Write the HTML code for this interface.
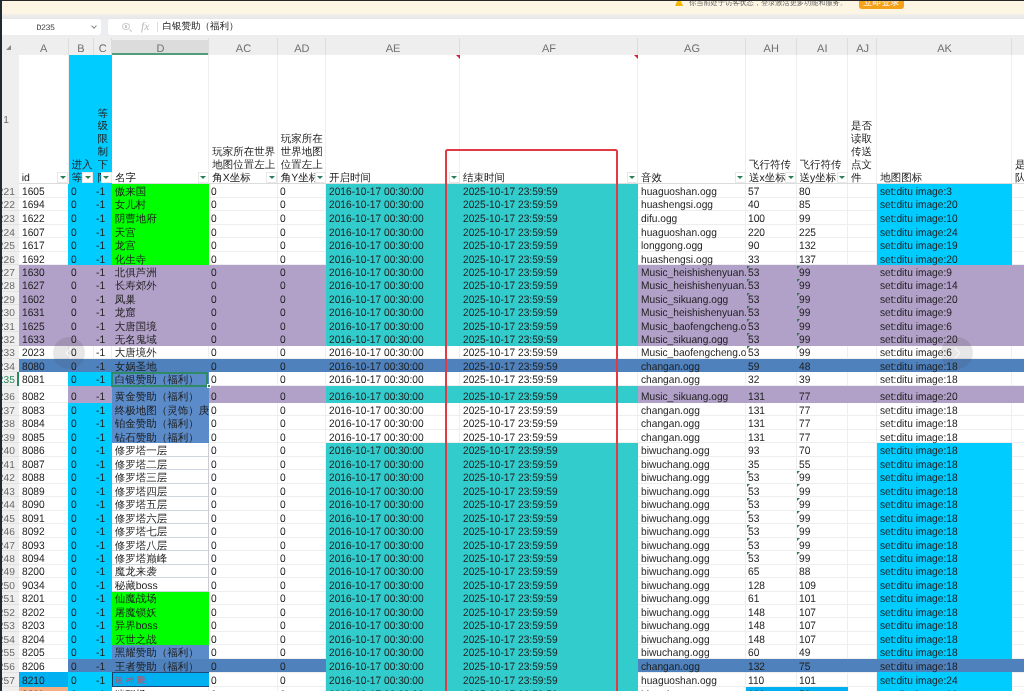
<!DOCTYPE html>
<html><head><meta charset="utf-8">
<style>
html,body{margin:0;padding:0;}
body{width:1024px;height:691px;overflow:hidden;position:relative;background:#fff;font-family:"Liberation Sans",sans-serif;text-rendering:geometricPrecision;}
div{position:absolute;box-sizing:border-box;}
.t{font-size:10.2px;color:#1e1e1e;white-space:nowrap;overflow:hidden;}
.h{font-size:10.5px;color:#222;}
.fb{width:11px;height:11px;background:#fff;border:1px solid #e8e8e8;}
.fb:after{content:"";position:absolute;left:1.5px;top:3px;border-left:3px solid transparent;border-right:3px solid transparent;border-top:3.5px solid #2a7d55;}
.tri{width:0;height:0;border-top:3.5px solid #2d7a48;border-right:3.5px solid transparent;}
.ctri{width:0;height:0;border-top:4px solid #d8203a;border-left:4px solid transparent;}
.rn{font-size:10.2px;color:#6a6a6a;white-space:nowrap;}
.cl{font-size:11px;color:#6e6e6e;text-align:center;white-space:nowrap;}
.corner{width:0;height:0;border-bottom:5px solid #8a8a8a;border-left:5px solid transparent;}
.circ{width:32px;height:32px;border-radius:50%;background:rgba(60,60,60,0.12);}
.chev{position:absolute;top:12.5px;width:7px;height:7px;border-top:1.7px solid rgba(255,255,255,0.85);border-left:1.7px solid rgba(255,255,255,0.85);}
.chev.l{left:14.25px;transform:rotate(-45deg);}
.chev.r{left:10.35px;transform:rotate(135deg);}
</style></head><body>
<div style="left:0;top:0;width:1024px;height:691px;overflow:hidden;will-change:transform">
<!-- body -->
<div style="left:67.50px;top:55.00px;width:1.00px;height:636.00px;background:#eeeeee"></div>
<div style="left:92.50px;top:55.00px;width:1.00px;height:636.00px;background:#eeeeee"></div>
<div style="left:111.00px;top:55.00px;width:1.00px;height:636.00px;background:#eeeeee"></div>
<div style="left:208.20px;top:55.00px;width:1.00px;height:636.00px;background:#eeeeee"></div>
<div style="left:276.70px;top:55.00px;width:1.00px;height:636.00px;background:#eeeeee"></div>
<div style="left:325.00px;top:55.00px;width:1.00px;height:636.00px;background:#eeeeee"></div>
<div style="left:459.00px;top:55.00px;width:1.00px;height:636.00px;background:#eeeeee"></div>
<div style="left:637.00px;top:55.00px;width:1.00px;height:636.00px;background:#eeeeee"></div>
<div style="left:745.00px;top:55.00px;width:1.00px;height:636.00px;background:#eeeeee"></div>
<div style="left:795.50px;top:55.00px;width:1.00px;height:636.00px;background:#eeeeee"></div>
<div style="left:847.00px;top:55.00px;width:1.00px;height:636.00px;background:#eeeeee"></div>
<div style="left:876.20px;top:55.00px;width:1.00px;height:636.00px;background:#eeeeee"></div>
<div style="left:1011.00px;top:55.00px;width:1.00px;height:636.00px;background:#eeeeee"></div>
<div style="left:1089.00px;top:55.00px;width:1.00px;height:636.00px;background:#eeeeee"></div>
<div style="left:18.70px;top:183.00px;width:1024.00px;height:1.00px;background:#dcdcdc"></div>
<div style="left:18.70px;top:196.56px;width:1024.00px;height:1.00px;background:#eeeeee"></div>
<div style="left:18.70px;top:210.12px;width:1024.00px;height:1.00px;background:#eeeeee"></div>
<div style="left:18.70px;top:223.68px;width:1024.00px;height:1.00px;background:#eeeeee"></div>
<div style="left:18.70px;top:237.23px;width:1024.00px;height:1.00px;background:#eeeeee"></div>
<div style="left:18.70px;top:250.79px;width:1024.00px;height:1.00px;background:#eeeeee"></div>
<div style="left:18.70px;top:264.35px;width:1024.00px;height:1.00px;background:#eeeeee"></div>
<div style="left:18.70px;top:277.73px;width:1024.00px;height:1.00px;background:#eeeeee"></div>
<div style="left:18.70px;top:291.10px;width:1024.00px;height:1.00px;background:#eeeeee"></div>
<div style="left:18.70px;top:304.48px;width:1024.00px;height:1.00px;background:#eeeeee"></div>
<div style="left:18.70px;top:317.85px;width:1024.00px;height:1.00px;background:#eeeeee"></div>
<div style="left:18.70px;top:331.23px;width:1024.00px;height:1.00px;background:#eeeeee"></div>
<div style="left:18.70px;top:344.60px;width:1024.00px;height:1.00px;background:#eeeeee"></div>
<div style="left:18.70px;top:357.70px;width:1024.00px;height:1.00px;background:#eeeeee"></div>
<div style="left:18.70px;top:371.40px;width:1024.00px;height:1.00px;background:#eeeeee"></div>
<div style="left:18.70px;top:385.10px;width:1024.00px;height:1.00px;background:#eeeeee"></div>
<div style="left:18.70px;top:401.80px;width:1024.00px;height:1.00px;background:#eeeeee"></div>
<div style="left:18.70px;top:415.30px;width:1024.00px;height:1.00px;background:#eeeeee"></div>
<div style="left:18.70px;top:428.80px;width:1024.00px;height:1.00px;background:#eeeeee"></div>
<div style="left:18.70px;top:442.30px;width:1024.00px;height:1.00px;background:#eeeeee"></div>
<div style="left:18.70px;top:455.80px;width:1024.00px;height:1.00px;background:#eeeeee"></div>
<div style="left:18.70px;top:469.30px;width:1024.00px;height:1.00px;background:#eeeeee"></div>
<div style="left:18.70px;top:482.80px;width:1024.00px;height:1.00px;background:#eeeeee"></div>
<div style="left:18.70px;top:496.30px;width:1024.00px;height:1.00px;background:#eeeeee"></div>
<div style="left:18.70px;top:509.80px;width:1024.00px;height:1.00px;background:#eeeeee"></div>
<div style="left:18.70px;top:523.30px;width:1024.00px;height:1.00px;background:#eeeeee"></div>
<div style="left:18.70px;top:536.80px;width:1024.00px;height:1.00px;background:#eeeeee"></div>
<div style="left:18.70px;top:550.30px;width:1024.00px;height:1.00px;background:#eeeeee"></div>
<div style="left:18.70px;top:563.74px;width:1024.00px;height:1.00px;background:#eeeeee"></div>
<div style="left:18.70px;top:577.17px;width:1024.00px;height:1.00px;background:#eeeeee"></div>
<div style="left:18.70px;top:590.61px;width:1024.00px;height:1.00px;background:#eeeeee"></div>
<div style="left:18.70px;top:604.05px;width:1024.00px;height:1.00px;background:#eeeeee"></div>
<div style="left:18.70px;top:617.49px;width:1024.00px;height:1.00px;background:#eeeeee"></div>
<div style="left:18.70px;top:630.92px;width:1024.00px;height:1.00px;background:#eeeeee"></div>
<div style="left:18.70px;top:644.36px;width:1024.00px;height:1.00px;background:#eeeeee"></div>
<div style="left:18.70px;top:657.80px;width:1024.00px;height:1.00px;background:#eeeeee"></div>
<div style="left:18.70px;top:671.50px;width:1024.00px;height:1.00px;background:#eeeeee"></div>
<div style="left:18.70px;top:686.00px;width:1024.00px;height:1.00px;background:#eeeeee"></div>
<div style="left:18.70px;top:699.50px;width:1024.00px;height:1.00px;background:#eeeeee"></div>
<div style="left:68.00px;top:184.00px;width:44.00px;height:14.00px;background:#00ccff"></div>
<div style="left:112.00px;top:184.00px;width:97.00px;height:14.00px;background:#00ff00"></div>
<div style="left:326.00px;top:184.00px;width:312.00px;height:14.00px;background:#33cccc"></div>
<div style="left:877.00px;top:184.00px;width:135.00px;height:14.00px;background:#00ccff"></div>
<div style="left:68.00px;top:198.00px;width:44.00px;height:13.00px;background:#00ccff"></div>
<div style="left:112.00px;top:198.00px;width:97.00px;height:13.00px;background:#00ff00"></div>
<div style="left:326.00px;top:198.00px;width:312.00px;height:13.00px;background:#33cccc"></div>
<div style="left:877.00px;top:198.00px;width:135.00px;height:13.00px;background:#00ccff"></div>
<div style="left:68.00px;top:211.00px;width:44.00px;height:14.00px;background:#00ccff"></div>
<div style="left:112.00px;top:211.00px;width:97.00px;height:14.00px;background:#00ff00"></div>
<div style="left:326.00px;top:211.00px;width:312.00px;height:14.00px;background:#33cccc"></div>
<div style="left:877.00px;top:211.00px;width:135.00px;height:14.00px;background:#00ccff"></div>
<div style="left:68.00px;top:225.00px;width:44.00px;height:13.00px;background:#00ccff"></div>
<div style="left:112.00px;top:225.00px;width:97.00px;height:13.00px;background:#00ff00"></div>
<div style="left:326.00px;top:225.00px;width:312.00px;height:13.00px;background:#33cccc"></div>
<div style="left:877.00px;top:225.00px;width:135.00px;height:13.00px;background:#00ccff"></div>
<div style="left:68.00px;top:238.00px;width:44.00px;height:14.00px;background:#00ccff"></div>
<div style="left:112.00px;top:238.00px;width:97.00px;height:14.00px;background:#00ff00"></div>
<div style="left:326.00px;top:238.00px;width:312.00px;height:14.00px;background:#33cccc"></div>
<div style="left:877.00px;top:238.00px;width:135.00px;height:14.00px;background:#00ccff"></div>
<div style="left:68.00px;top:252.00px;width:44.00px;height:13.00px;background:#00ccff"></div>
<div style="left:112.00px;top:252.00px;width:97.00px;height:13.00px;background:#00ff00"></div>
<div style="left:326.00px;top:252.00px;width:312.00px;height:13.00px;background:#33cccc"></div>
<div style="left:877.00px;top:252.00px;width:135.00px;height:13.00px;background:#00ccff"></div>
<div style="left:19.00px;top:265.00px;width:307.00px;height:14.00px;background:#b1a0c7"></div>
<div style="left:326.00px;top:265.00px;width:312.00px;height:14.00px;background:#33cccc"></div>
<div style="left:638.00px;top:265.00px;width:452.00px;height:14.00px;background:#b1a0c7"></div>
<div style="left:19.00px;top:279.00px;width:307.00px;height:13.00px;background:#b1a0c7"></div>
<div style="left:326.00px;top:279.00px;width:312.00px;height:13.00px;background:#33cccc"></div>
<div style="left:638.00px;top:279.00px;width:452.00px;height:13.00px;background:#b1a0c7"></div>
<div style="left:19.00px;top:292.00px;width:307.00px;height:13.00px;background:#b1a0c7"></div>
<div style="left:326.00px;top:292.00px;width:312.00px;height:13.00px;background:#33cccc"></div>
<div style="left:638.00px;top:292.00px;width:452.00px;height:13.00px;background:#b1a0c7"></div>
<div style="left:19.00px;top:305.00px;width:307.00px;height:14.00px;background:#b1a0c7"></div>
<div style="left:326.00px;top:305.00px;width:312.00px;height:14.00px;background:#33cccc"></div>
<div style="left:638.00px;top:305.00px;width:452.00px;height:14.00px;background:#b1a0c7"></div>
<div style="left:19.00px;top:319.00px;width:307.00px;height:13.00px;background:#b1a0c7"></div>
<div style="left:326.00px;top:319.00px;width:312.00px;height:13.00px;background:#33cccc"></div>
<div style="left:638.00px;top:319.00px;width:452.00px;height:13.00px;background:#b1a0c7"></div>
<div style="left:19.00px;top:332.00px;width:307.00px;height:14.00px;background:#b1a0c7"></div>
<div style="left:326.00px;top:332.00px;width:312.00px;height:14.00px;background:#33cccc"></div>
<div style="left:638.00px;top:332.00px;width:452.00px;height:14.00px;background:#b1a0c7"></div>
<div style="left:19.00px;top:359.00px;width:1071.00px;height:13.00px;background:#4f81bd"></div>
<div style="left:68.00px;top:372.00px;width:44.00px;height:14.00px;background:#00ccff"></div>
<div style="left:112.00px;top:372.00px;width:97.00px;height:14.00px;background:#5b8bc9"></div>
<div style="left:68.00px;top:386.00px;width:44.00px;height:17.00px;background:#b1a0c7"></div>
<div style="left:112.00px;top:386.00px;width:97.00px;height:17.00px;background:#5b8bc9"></div>
<div style="left:209.00px;top:386.00px;width:117.00px;height:17.00px;background:#b1a0c7"></div>
<div style="left:326.00px;top:386.00px;width:312.00px;height:17.00px;background:#33cccc"></div>
<div style="left:638.00px;top:386.00px;width:452.00px;height:17.00px;background:#b1a0c7"></div>
<div style="left:68.00px;top:403.00px;width:44.00px;height:13.00px;background:#00ccff"></div>
<div style="left:112.00px;top:403.00px;width:97.00px;height:13.00px;background:#5b8bc9"></div>
<div style="left:68.00px;top:416.00px;width:44.00px;height:14.00px;background:#00ccff"></div>
<div style="left:112.00px;top:416.00px;width:97.00px;height:14.00px;background:#5b8bc9"></div>
<div style="left:68.00px;top:430.00px;width:44.00px;height:13.00px;background:#00ccff"></div>
<div style="left:112.00px;top:430.00px;width:97.00px;height:13.00px;background:#5b8bc9"></div>
<div style="left:68.00px;top:443.00px;width:44.00px;height:14.00px;background:#00ccff"></div>
<div style="left:326.00px;top:443.00px;width:312.00px;height:14.00px;background:#33cccc"></div>
<div style="left:877.00px;top:443.00px;width:135.00px;height:14.00px;background:#00ccff"></div>
<div style="left:68.00px;top:457.00px;width:44.00px;height:13.00px;background:#00ccff"></div>
<div style="left:326.00px;top:457.00px;width:312.00px;height:13.00px;background:#33cccc"></div>
<div style="left:877.00px;top:457.00px;width:135.00px;height:13.00px;background:#00ccff"></div>
<div style="left:68.00px;top:470.00px;width:44.00px;height:14.00px;background:#00ccff"></div>
<div style="left:326.00px;top:470.00px;width:312.00px;height:14.00px;background:#33cccc"></div>
<div style="left:877.00px;top:470.00px;width:135.00px;height:14.00px;background:#00ccff"></div>
<div style="left:68.00px;top:484.00px;width:44.00px;height:13.00px;background:#00ccff"></div>
<div style="left:326.00px;top:484.00px;width:312.00px;height:13.00px;background:#33cccc"></div>
<div style="left:877.00px;top:484.00px;width:135.00px;height:13.00px;background:#00ccff"></div>
<div style="left:68.00px;top:497.00px;width:44.00px;height:14.00px;background:#00ccff"></div>
<div style="left:326.00px;top:497.00px;width:312.00px;height:14.00px;background:#33cccc"></div>
<div style="left:877.00px;top:497.00px;width:135.00px;height:14.00px;background:#00ccff"></div>
<div style="left:68.00px;top:511.00px;width:44.00px;height:13.00px;background:#00ccff"></div>
<div style="left:326.00px;top:511.00px;width:312.00px;height:13.00px;background:#33cccc"></div>
<div style="left:877.00px;top:511.00px;width:135.00px;height:13.00px;background:#00ccff"></div>
<div style="left:68.00px;top:524.00px;width:44.00px;height:14.00px;background:#00ccff"></div>
<div style="left:326.00px;top:524.00px;width:312.00px;height:14.00px;background:#33cccc"></div>
<div style="left:877.00px;top:524.00px;width:135.00px;height:14.00px;background:#00ccff"></div>
<div style="left:68.00px;top:538.00px;width:44.00px;height:13.00px;background:#00ccff"></div>
<div style="left:326.00px;top:538.00px;width:312.00px;height:13.00px;background:#33cccc"></div>
<div style="left:877.00px;top:538.00px;width:135.00px;height:13.00px;background:#00ccff"></div>
<div style="left:68.00px;top:551.00px;width:44.00px;height:14.00px;background:#00ccff"></div>
<div style="left:326.00px;top:551.00px;width:312.00px;height:14.00px;background:#33cccc"></div>
<div style="left:877.00px;top:551.00px;width:135.00px;height:14.00px;background:#00ccff"></div>
<div style="left:68.00px;top:565.00px;width:44.00px;height:13.00px;background:#00ccff"></div>
<div style="left:326.00px;top:565.00px;width:312.00px;height:13.00px;background:#33cccc"></div>
<div style="left:877.00px;top:565.00px;width:135.00px;height:13.00px;background:#00ccff"></div>
<div style="left:68.00px;top:578.00px;width:44.00px;height:14.00px;background:#00ccff"></div>
<div style="left:326.00px;top:578.00px;width:312.00px;height:14.00px;background:#33cccc"></div>
<div style="left:877.00px;top:578.00px;width:135.00px;height:14.00px;background:#00ccff"></div>
<div style="left:68.00px;top:592.00px;width:44.00px;height:13.00px;background:#00ccff"></div>
<div style="left:112.00px;top:592.00px;width:97.00px;height:13.00px;background:#00ff00"></div>
<div style="left:326.00px;top:592.00px;width:312.00px;height:13.00px;background:#33cccc"></div>
<div style="left:877.00px;top:592.00px;width:135.00px;height:13.00px;background:#00ccff"></div>
<div style="left:68.00px;top:605.00px;width:44.00px;height:13.00px;background:#00ccff"></div>
<div style="left:112.00px;top:605.00px;width:97.00px;height:13.00px;background:#00ff00"></div>
<div style="left:326.00px;top:605.00px;width:312.00px;height:13.00px;background:#33cccc"></div>
<div style="left:877.00px;top:605.00px;width:135.00px;height:13.00px;background:#00ccff"></div>
<div style="left:68.00px;top:618.00px;width:44.00px;height:14.00px;background:#00ccff"></div>
<div style="left:112.00px;top:618.00px;width:97.00px;height:14.00px;background:#00ff00"></div>
<div style="left:326.00px;top:618.00px;width:312.00px;height:14.00px;background:#33cccc"></div>
<div style="left:877.00px;top:618.00px;width:135.00px;height:14.00px;background:#00ccff"></div>
<div style="left:68.00px;top:632.00px;width:44.00px;height:13.00px;background:#00ccff"></div>
<div style="left:112.00px;top:632.00px;width:97.00px;height:13.00px;background:#00ff00"></div>
<div style="left:326.00px;top:632.00px;width:312.00px;height:13.00px;background:#33cccc"></div>
<div style="left:877.00px;top:632.00px;width:135.00px;height:13.00px;background:#00ccff"></div>
<div style="left:68.00px;top:645.00px;width:44.00px;height:14.00px;background:#00ccff"></div>
<div style="left:112.00px;top:645.00px;width:97.00px;height:14.00px;background:#5b8bc9"></div>
<div style="left:326.00px;top:645.00px;width:312.00px;height:14.00px;background:#33cccc"></div>
<div style="left:877.00px;top:645.00px;width:135.00px;height:14.00px;background:#00ccff"></div>
<div style="left:68.00px;top:659.00px;width:258.00px;height:13.00px;background:#4f81bd"></div>
<div style="left:326.00px;top:659.00px;width:312.00px;height:13.00px;background:#33cccc"></div>
<div style="left:638.00px;top:659.00px;width:452.00px;height:13.00px;background:#4f81bd"></div>
<div style="left:19.00px;top:672.00px;width:49.00px;height:15.00px;background:#00b0f0"></div>
<div style="left:68.00px;top:672.00px;width:44.00px;height:15.00px;background:#00ccff"></div>
<div style="left:112.00px;top:672.00px;width:97.00px;height:15.00px;background:#00b0f0"></div>
<div style="left:326.00px;top:672.00px;width:312.00px;height:15.00px;background:#33cccc"></div>
<div style="left:877.00px;top:672.00px;width:135.00px;height:15.00px;background:#00ccff"></div>
<div style="left:19.00px;top:687.00px;width:49.00px;height:13.00px;background:#f4b084"></div>
<div style="left:68.00px;top:687.00px;width:44.00px;height:13.00px;background:#00ccff"></div>
<div style="left:326.00px;top:687.00px;width:312.00px;height:13.00px;background:#33cccc"></div>
<div style="left:746.00px;top:687.00px;width:102.00px;height:13.00px;background:#00b0f0"></div>
<div style="left:877.00px;top:687.00px;width:135.00px;height:13.00px;background:#00ccff"></div>
<div style="left:112.00px;top:456.00px;width:97.00px;height:1.00px;background:#cdd6e0"></div>
<div style="left:208.00px;top:443.00px;width:1.00px;height:14.00px;background:#c9cdd2"></div>
<div style="left:112.00px;top:469.00px;width:97.00px;height:1.00px;background:#cdd6e0"></div>
<div style="left:208.00px;top:457.00px;width:1.00px;height:13.00px;background:#c9cdd2"></div>
<div style="left:112.00px;top:483.00px;width:97.00px;height:1.00px;background:#cdd6e0"></div>
<div style="left:208.00px;top:470.00px;width:1.00px;height:14.00px;background:#c9cdd2"></div>
<div style="left:112.00px;top:496.00px;width:97.00px;height:1.00px;background:#cdd6e0"></div>
<div style="left:208.00px;top:484.00px;width:1.00px;height:13.00px;background:#c9cdd2"></div>
<div style="left:112.00px;top:510.00px;width:97.00px;height:1.00px;background:#cdd6e0"></div>
<div style="left:208.00px;top:497.00px;width:1.00px;height:14.00px;background:#c9cdd2"></div>
<div style="left:112.00px;top:523.00px;width:97.00px;height:1.00px;background:#cdd6e0"></div>
<div style="left:208.00px;top:511.00px;width:1.00px;height:13.00px;background:#c9cdd2"></div>
<div style="left:112.00px;top:537.00px;width:97.00px;height:1.00px;background:#cdd6e0"></div>
<div style="left:208.00px;top:524.00px;width:1.00px;height:14.00px;background:#c9cdd2"></div>
<div style="left:112.00px;top:550.00px;width:97.00px;height:1.00px;background:#cdd6e0"></div>
<div style="left:208.00px;top:538.00px;width:1.00px;height:13.00px;background:#c9cdd2"></div>
<div style="left:112.00px;top:564.00px;width:97.00px;height:1.00px;background:#cdd6e0"></div>
<div style="left:208.00px;top:551.00px;width:1.00px;height:14.00px;background:#c9cdd2"></div>
<div style="left:112.00px;top:577.00px;width:97.00px;height:1.00px;background:#cdd6e0"></div>
<div style="left:208.00px;top:565.00px;width:1.00px;height:13.00px;background:#c9cdd2"></div>
<div style="left:112.00px;top:591.00px;width:97.00px;height:1.00px;background:#cdd6e0"></div>
<div style="left:208.00px;top:578.00px;width:1.00px;height:14.00px;background:#c9cdd2"></div>
<div class="t" style="left:21.70px;top:185.86px;height:13.50px;line-height:13.50px;width:49.58px;transform:scaleX(0.944);transform-origin:0 50%;font-size:10.8px;">1605</div>
<div class="t" style="left:71.00px;top:185.86px;height:13.50px;line-height:13.50px;width:21.19px;transform:scaleX(0.944);transform-origin:0 50%;font-size:10.8px;">0</div>
<div class="t" style="left:92.82px;top:185.86px;height:13.50px;line-height:13.50px;width:12.18px;transform:scaleX(0.944);transform-origin:100% 50%;font-size:10.8px;text-align:right;">-1</div>
<div class="t" style="left:114.70px;top:185.86px;height:13.50px;line-height:13.50px;width:94.20px;font-size:10.5px;">傲来国</div>
<div class="t" style="left:211.20px;top:185.86px;height:13.50px;line-height:13.50px;width:31.78px;transform:scaleX(0.944);transform-origin:0 50%;font-size:10.8px;">0</div>
<div class="t" style="left:279.70px;top:185.86px;height:13.50px;line-height:13.50px;width:31.78px;transform:scaleX(0.944);transform-origin:0 50%;font-size:10.8px;">0</div>
<div class="t" style="left:328.60px;top:185.86px;height:13.50px;line-height:13.50px;width:127.12px;transform:scaleX(0.944);transform-origin:0 50%;font-size:10.8px;">2016-10-17 00:30:00</div>
<div class="t" style="left:462.60px;top:185.86px;height:13.50px;line-height:13.50px;width:127.12px;transform:scaleX(0.944);transform-origin:0 50%;font-size:10.8px;">2025-10-17 23:59:59</div>
<div class="t" style="left:641.00px;top:185.86px;height:13.50px;line-height:13.50px;width:111.23px;transform:scaleX(0.944);transform-origin:0 50%;font-size:10.8px;">huaguoshan.ogg</div>
<div class="t" style="left:748.00px;top:185.86px;height:13.50px;line-height:13.50px;width:42.37px;transform:scaleX(0.944);transform-origin:0 50%;font-size:10.8px;">57</div>
<div class="t" style="left:798.50px;top:185.86px;height:13.50px;line-height:13.50px;width:42.37px;transform:scaleX(0.944);transform-origin:0 50%;font-size:10.8px;">80</div>
<div class="t" style="left:879.90px;top:185.86px;height:13.50px;line-height:13.50px;width:127.12px;transform:scaleX(0.944);transform-origin:0 50%;font-size:10.8px;">set:ditu image:3</div>
<div class="t" style="left:21.70px;top:199.42px;height:13.50px;line-height:13.50px;width:49.58px;transform:scaleX(0.944);transform-origin:0 50%;font-size:10.8px;">1694</div>
<div class="t" style="left:71.00px;top:199.42px;height:13.50px;line-height:13.50px;width:21.19px;transform:scaleX(0.944);transform-origin:0 50%;font-size:10.8px;">0</div>
<div class="t" style="left:92.82px;top:199.42px;height:13.50px;line-height:13.50px;width:12.18px;transform:scaleX(0.944);transform-origin:100% 50%;font-size:10.8px;text-align:right;">-1</div>
<div class="t" style="left:114.70px;top:199.42px;height:13.50px;line-height:13.50px;width:94.20px;font-size:10.5px;">女儿村</div>
<div class="t" style="left:211.20px;top:199.42px;height:13.50px;line-height:13.50px;width:31.78px;transform:scaleX(0.944);transform-origin:0 50%;font-size:10.8px;">0</div>
<div class="t" style="left:279.70px;top:199.42px;height:13.50px;line-height:13.50px;width:31.78px;transform:scaleX(0.944);transform-origin:0 50%;font-size:10.8px;">0</div>
<div class="t" style="left:328.60px;top:199.42px;height:13.50px;line-height:13.50px;width:127.12px;transform:scaleX(0.944);transform-origin:0 50%;font-size:10.8px;">2016-10-17 00:30:00</div>
<div class="t" style="left:462.60px;top:199.42px;height:13.50px;line-height:13.50px;width:127.12px;transform:scaleX(0.944);transform-origin:0 50%;font-size:10.8px;">2025-10-17 23:59:59</div>
<div class="t" style="left:641.00px;top:199.42px;height:13.50px;line-height:13.50px;width:111.23px;transform:scaleX(0.944);transform-origin:0 50%;font-size:10.8px;">huashengsi.ogg</div>
<div class="t" style="left:748.00px;top:199.42px;height:13.50px;line-height:13.50px;width:42.37px;transform:scaleX(0.944);transform-origin:0 50%;font-size:10.8px;">40</div>
<div class="t" style="left:798.50px;top:199.42px;height:13.50px;line-height:13.50px;width:42.37px;transform:scaleX(0.944);transform-origin:0 50%;font-size:10.8px;">85</div>
<div class="t" style="left:879.90px;top:199.42px;height:13.50px;line-height:13.50px;width:127.12px;transform:scaleX(0.944);transform-origin:0 50%;font-size:10.8px;">set:ditu image:20</div>
<div class="t" style="left:21.70px;top:212.98px;height:13.50px;line-height:13.50px;width:49.58px;transform:scaleX(0.944);transform-origin:0 50%;font-size:10.8px;">1622</div>
<div class="t" style="left:71.00px;top:212.98px;height:13.50px;line-height:13.50px;width:21.19px;transform:scaleX(0.944);transform-origin:0 50%;font-size:10.8px;">0</div>
<div class="t" style="left:92.82px;top:212.98px;height:13.50px;line-height:13.50px;width:12.18px;transform:scaleX(0.944);transform-origin:100% 50%;font-size:10.8px;text-align:right;">-1</div>
<div class="t" style="left:114.70px;top:212.98px;height:13.50px;line-height:13.50px;width:94.20px;font-size:10.5px;">阴曹地府</div>
<div class="t" style="left:211.20px;top:212.98px;height:13.50px;line-height:13.50px;width:31.78px;transform:scaleX(0.944);transform-origin:0 50%;font-size:10.8px;">0</div>
<div class="t" style="left:279.70px;top:212.98px;height:13.50px;line-height:13.50px;width:31.78px;transform:scaleX(0.944);transform-origin:0 50%;font-size:10.8px;">0</div>
<div class="t" style="left:328.60px;top:212.98px;height:13.50px;line-height:13.50px;width:127.12px;transform:scaleX(0.944);transform-origin:0 50%;font-size:10.8px;">2016-10-17 00:30:00</div>
<div class="t" style="left:462.60px;top:212.98px;height:13.50px;line-height:13.50px;width:127.12px;transform:scaleX(0.944);transform-origin:0 50%;font-size:10.8px;">2025-10-17 23:59:59</div>
<div class="t" style="left:641.00px;top:212.98px;height:13.50px;line-height:13.50px;width:111.23px;transform:scaleX(0.944);transform-origin:0 50%;font-size:10.8px;">difu.ogg</div>
<div class="t" style="left:748.00px;top:212.98px;height:13.50px;line-height:13.50px;width:42.37px;transform:scaleX(0.944);transform-origin:0 50%;font-size:10.8px;">100</div>
<div class="t" style="left:798.50px;top:212.98px;height:13.50px;line-height:13.50px;width:42.37px;transform:scaleX(0.944);transform-origin:0 50%;font-size:10.8px;">99</div>
<div class="t" style="left:879.90px;top:212.98px;height:13.50px;line-height:13.50px;width:127.12px;transform:scaleX(0.944);transform-origin:0 50%;font-size:10.8px;">set:ditu image:10</div>
<div class="t" style="left:21.70px;top:226.53px;height:13.50px;line-height:13.50px;width:49.58px;transform:scaleX(0.944);transform-origin:0 50%;font-size:10.8px;">1607</div>
<div class="t" style="left:71.00px;top:226.53px;height:13.50px;line-height:13.50px;width:21.19px;transform:scaleX(0.944);transform-origin:0 50%;font-size:10.8px;">0</div>
<div class="t" style="left:92.82px;top:226.53px;height:13.50px;line-height:13.50px;width:12.18px;transform:scaleX(0.944);transform-origin:100% 50%;font-size:10.8px;text-align:right;">-1</div>
<div class="t" style="left:114.70px;top:226.53px;height:13.50px;line-height:13.50px;width:94.20px;font-size:10.5px;">天宫</div>
<div class="t" style="left:211.20px;top:226.53px;height:13.50px;line-height:13.50px;width:31.78px;transform:scaleX(0.944);transform-origin:0 50%;font-size:10.8px;">0</div>
<div class="t" style="left:279.70px;top:226.53px;height:13.50px;line-height:13.50px;width:31.78px;transform:scaleX(0.944);transform-origin:0 50%;font-size:10.8px;">0</div>
<div class="t" style="left:328.60px;top:226.53px;height:13.50px;line-height:13.50px;width:127.12px;transform:scaleX(0.944);transform-origin:0 50%;font-size:10.8px;">2016-10-17 00:30:00</div>
<div class="t" style="left:462.60px;top:226.53px;height:13.50px;line-height:13.50px;width:127.12px;transform:scaleX(0.944);transform-origin:0 50%;font-size:10.8px;">2025-10-17 23:59:59</div>
<div class="t" style="left:641.00px;top:226.53px;height:13.50px;line-height:13.50px;width:111.23px;transform:scaleX(0.944);transform-origin:0 50%;font-size:10.8px;">huaguoshan.ogg</div>
<div class="t" style="left:748.00px;top:226.53px;height:13.50px;line-height:13.50px;width:42.37px;transform:scaleX(0.944);transform-origin:0 50%;font-size:10.8px;">220</div>
<div class="t" style="left:798.50px;top:226.53px;height:13.50px;line-height:13.50px;width:42.37px;transform:scaleX(0.944);transform-origin:0 50%;font-size:10.8px;">225</div>
<div class="t" style="left:879.90px;top:226.53px;height:13.50px;line-height:13.50px;width:127.12px;transform:scaleX(0.944);transform-origin:0 50%;font-size:10.8px;">set:ditu image:24</div>
<div class="t" style="left:21.70px;top:240.09px;height:13.50px;line-height:13.50px;width:49.58px;transform:scaleX(0.944);transform-origin:0 50%;font-size:10.8px;">1617</div>
<div class="t" style="left:71.00px;top:240.09px;height:13.50px;line-height:13.50px;width:21.19px;transform:scaleX(0.944);transform-origin:0 50%;font-size:10.8px;">0</div>
<div class="t" style="left:92.82px;top:240.09px;height:13.50px;line-height:13.50px;width:12.18px;transform:scaleX(0.944);transform-origin:100% 50%;font-size:10.8px;text-align:right;">-1</div>
<div class="t" style="left:114.70px;top:240.09px;height:13.50px;line-height:13.50px;width:94.20px;font-size:10.5px;">龙宫</div>
<div class="t" style="left:211.20px;top:240.09px;height:13.50px;line-height:13.50px;width:31.78px;transform:scaleX(0.944);transform-origin:0 50%;font-size:10.8px;">0</div>
<div class="t" style="left:279.70px;top:240.09px;height:13.50px;line-height:13.50px;width:31.78px;transform:scaleX(0.944);transform-origin:0 50%;font-size:10.8px;">0</div>
<div class="t" style="left:328.60px;top:240.09px;height:13.50px;line-height:13.50px;width:127.12px;transform:scaleX(0.944);transform-origin:0 50%;font-size:10.8px;">2016-10-17 00:30:00</div>
<div class="t" style="left:462.60px;top:240.09px;height:13.50px;line-height:13.50px;width:127.12px;transform:scaleX(0.944);transform-origin:0 50%;font-size:10.8px;">2025-10-17 23:59:59</div>
<div class="t" style="left:641.00px;top:240.09px;height:13.50px;line-height:13.50px;width:111.23px;transform:scaleX(0.944);transform-origin:0 50%;font-size:10.8px;">longgong.ogg</div>
<div class="t" style="left:748.00px;top:240.09px;height:13.50px;line-height:13.50px;width:42.37px;transform:scaleX(0.944);transform-origin:0 50%;font-size:10.8px;">90</div>
<div class="t" style="left:798.50px;top:240.09px;height:13.50px;line-height:13.50px;width:42.37px;transform:scaleX(0.944);transform-origin:0 50%;font-size:10.8px;">132</div>
<div class="t" style="left:879.90px;top:240.09px;height:13.50px;line-height:13.50px;width:127.12px;transform:scaleX(0.944);transform-origin:0 50%;font-size:10.8px;">set:ditu image:19</div>
<div class="t" style="left:21.70px;top:253.65px;height:13.50px;line-height:13.50px;width:49.58px;transform:scaleX(0.944);transform-origin:0 50%;font-size:10.8px;">1692</div>
<div class="t" style="left:71.00px;top:253.65px;height:13.50px;line-height:13.50px;width:21.19px;transform:scaleX(0.944);transform-origin:0 50%;font-size:10.8px;">0</div>
<div class="t" style="left:92.82px;top:253.65px;height:13.50px;line-height:13.50px;width:12.18px;transform:scaleX(0.944);transform-origin:100% 50%;font-size:10.8px;text-align:right;">-1</div>
<div class="t" style="left:114.70px;top:253.65px;height:13.50px;line-height:13.50px;width:94.20px;font-size:10.5px;">化生寺</div>
<div class="t" style="left:211.20px;top:253.65px;height:13.50px;line-height:13.50px;width:31.78px;transform:scaleX(0.944);transform-origin:0 50%;font-size:10.8px;">0</div>
<div class="t" style="left:279.70px;top:253.65px;height:13.50px;line-height:13.50px;width:31.78px;transform:scaleX(0.944);transform-origin:0 50%;font-size:10.8px;">0</div>
<div class="t" style="left:328.60px;top:253.65px;height:13.50px;line-height:13.50px;width:127.12px;transform:scaleX(0.944);transform-origin:0 50%;font-size:10.8px;">2016-10-17 00:30:00</div>
<div class="t" style="left:462.60px;top:253.65px;height:13.50px;line-height:13.50px;width:127.12px;transform:scaleX(0.944);transform-origin:0 50%;font-size:10.8px;">2025-10-17 23:59:59</div>
<div class="t" style="left:641.00px;top:253.65px;height:13.50px;line-height:13.50px;width:111.23px;transform:scaleX(0.944);transform-origin:0 50%;font-size:10.8px;">huashengsi.ogg</div>
<div class="t" style="left:748.00px;top:253.65px;height:13.50px;line-height:13.50px;width:42.37px;transform:scaleX(0.944);transform-origin:0 50%;font-size:10.8px;">33</div>
<div class="t" style="left:798.50px;top:253.65px;height:13.50px;line-height:13.50px;width:42.37px;transform:scaleX(0.944);transform-origin:0 50%;font-size:10.8px;">137</div>
<div class="t" style="left:879.90px;top:253.65px;height:13.50px;line-height:13.50px;width:127.12px;transform:scaleX(0.944);transform-origin:0 50%;font-size:10.8px;">set:ditu image:20</div>
<div class="t" style="left:21.70px;top:267.03px;height:13.50px;line-height:13.50px;width:49.58px;transform:scaleX(0.944);transform-origin:0 50%;font-size:10.8px;">1630</div>
<div class="t" style="left:71.00px;top:267.03px;height:13.50px;line-height:13.50px;width:21.19px;transform:scaleX(0.944);transform-origin:0 50%;font-size:10.8px;">0</div>
<div class="t" style="left:92.82px;top:267.03px;height:13.50px;line-height:13.50px;width:12.18px;transform:scaleX(0.944);transform-origin:100% 50%;font-size:10.8px;text-align:right;">-1</div>
<div class="t" style="left:114.70px;top:267.03px;height:13.50px;line-height:13.50px;width:94.20px;font-size:10.5px;">北俱芦洲</div>
<div class="t" style="left:211.20px;top:267.03px;height:13.50px;line-height:13.50px;width:31.78px;transform:scaleX(0.944);transform-origin:0 50%;font-size:10.8px;">0</div>
<div class="t" style="left:279.70px;top:267.03px;height:13.50px;line-height:13.50px;width:31.78px;transform:scaleX(0.944);transform-origin:0 50%;font-size:10.8px;">0</div>
<div class="t" style="left:328.60px;top:267.03px;height:13.50px;line-height:13.50px;width:127.12px;transform:scaleX(0.944);transform-origin:0 50%;font-size:10.8px;">2016-10-17 00:30:00</div>
<div class="t" style="left:462.60px;top:267.03px;height:13.50px;line-height:13.50px;width:127.12px;transform:scaleX(0.944);transform-origin:0 50%;font-size:10.8px;">2025-10-17 23:59:59</div>
<div class="t" style="left:641.00px;top:267.03px;height:13.50px;line-height:13.50px;width:111.23px;transform:scaleX(0.944);transform-origin:0 50%;font-size:10.8px;">Music_heishishenyuan.ogg</div>
<div class="t" style="left:748.00px;top:267.03px;height:13.50px;line-height:13.50px;width:42.37px;transform:scaleX(0.944);transform-origin:0 50%;font-size:10.8px;">53</div>
<div class="t" style="left:798.50px;top:267.03px;height:13.50px;line-height:13.50px;width:42.37px;transform:scaleX(0.944);transform-origin:0 50%;font-size:10.8px;">99</div>
<div class="t" style="left:879.90px;top:267.03px;height:13.50px;line-height:13.50px;width:127.12px;transform:scaleX(0.944);transform-origin:0 50%;font-size:10.8px;">set:ditu image:9</div>
<div class="tri" style="left:746.50px;top:265.85px"></div>
<div class="tri" style="left:797.00px;top:265.85px"></div>
<div class="t" style="left:21.70px;top:280.40px;height:13.50px;line-height:13.50px;width:49.58px;transform:scaleX(0.944);transform-origin:0 50%;font-size:10.8px;">1627</div>
<div class="t" style="left:71.00px;top:280.40px;height:13.50px;line-height:13.50px;width:21.19px;transform:scaleX(0.944);transform-origin:0 50%;font-size:10.8px;">0</div>
<div class="t" style="left:92.82px;top:280.40px;height:13.50px;line-height:13.50px;width:12.18px;transform:scaleX(0.944);transform-origin:100% 50%;font-size:10.8px;text-align:right;">-1</div>
<div class="t" style="left:114.70px;top:280.40px;height:13.50px;line-height:13.50px;width:94.20px;font-size:10.5px;">长寿郊外</div>
<div class="t" style="left:211.20px;top:280.40px;height:13.50px;line-height:13.50px;width:31.78px;transform:scaleX(0.944);transform-origin:0 50%;font-size:10.8px;">0</div>
<div class="t" style="left:279.70px;top:280.40px;height:13.50px;line-height:13.50px;width:31.78px;transform:scaleX(0.944);transform-origin:0 50%;font-size:10.8px;">0</div>
<div class="t" style="left:328.60px;top:280.40px;height:13.50px;line-height:13.50px;width:127.12px;transform:scaleX(0.944);transform-origin:0 50%;font-size:10.8px;">2016-10-17 00:30:00</div>
<div class="t" style="left:462.60px;top:280.40px;height:13.50px;line-height:13.50px;width:127.12px;transform:scaleX(0.944);transform-origin:0 50%;font-size:10.8px;">2025-10-17 23:59:59</div>
<div class="t" style="left:641.00px;top:280.40px;height:13.50px;line-height:13.50px;width:111.23px;transform:scaleX(0.944);transform-origin:0 50%;font-size:10.8px;">Music_heishishenyuan.ogg</div>
<div class="t" style="left:748.00px;top:280.40px;height:13.50px;line-height:13.50px;width:42.37px;transform:scaleX(0.944);transform-origin:0 50%;font-size:10.8px;">53</div>
<div class="t" style="left:798.50px;top:280.40px;height:13.50px;line-height:13.50px;width:42.37px;transform:scaleX(0.944);transform-origin:0 50%;font-size:10.8px;">99</div>
<div class="t" style="left:879.90px;top:280.40px;height:13.50px;line-height:13.50px;width:127.12px;transform:scaleX(0.944);transform-origin:0 50%;font-size:10.8px;">set:ditu image:14</div>
<div class="tri" style="left:746.50px;top:279.23px"></div>
<div class="tri" style="left:797.00px;top:279.23px"></div>
<div class="t" style="left:21.70px;top:293.78px;height:13.50px;line-height:13.50px;width:49.58px;transform:scaleX(0.944);transform-origin:0 50%;font-size:10.8px;">1602</div>
<div class="t" style="left:71.00px;top:293.78px;height:13.50px;line-height:13.50px;width:21.19px;transform:scaleX(0.944);transform-origin:0 50%;font-size:10.8px;">0</div>
<div class="t" style="left:92.82px;top:293.78px;height:13.50px;line-height:13.50px;width:12.18px;transform:scaleX(0.944);transform-origin:100% 50%;font-size:10.8px;text-align:right;">-1</div>
<div class="t" style="left:114.70px;top:293.78px;height:13.50px;line-height:13.50px;width:94.20px;font-size:10.5px;">凤巢</div>
<div class="t" style="left:211.20px;top:293.78px;height:13.50px;line-height:13.50px;width:31.78px;transform:scaleX(0.944);transform-origin:0 50%;font-size:10.8px;">0</div>
<div class="t" style="left:279.70px;top:293.78px;height:13.50px;line-height:13.50px;width:31.78px;transform:scaleX(0.944);transform-origin:0 50%;font-size:10.8px;">0</div>
<div class="t" style="left:328.60px;top:293.78px;height:13.50px;line-height:13.50px;width:127.12px;transform:scaleX(0.944);transform-origin:0 50%;font-size:10.8px;">2016-10-17 00:30:00</div>
<div class="t" style="left:462.60px;top:293.78px;height:13.50px;line-height:13.50px;width:127.12px;transform:scaleX(0.944);transform-origin:0 50%;font-size:10.8px;">2025-10-17 23:59:59</div>
<div class="t" style="left:641.00px;top:293.78px;height:13.50px;line-height:13.50px;width:111.23px;transform:scaleX(0.944);transform-origin:0 50%;font-size:10.8px;">Music_sikuang.ogg</div>
<div class="t" style="left:748.00px;top:293.78px;height:13.50px;line-height:13.50px;width:42.37px;transform:scaleX(0.944);transform-origin:0 50%;font-size:10.8px;">53</div>
<div class="t" style="left:798.50px;top:293.78px;height:13.50px;line-height:13.50px;width:42.37px;transform:scaleX(0.944);transform-origin:0 50%;font-size:10.8px;">99</div>
<div class="t" style="left:879.90px;top:293.78px;height:13.50px;line-height:13.50px;width:127.12px;transform:scaleX(0.944);transform-origin:0 50%;font-size:10.8px;">set:ditu image:20</div>
<div class="tri" style="left:746.50px;top:292.60px"></div>
<div class="tri" style="left:797.00px;top:292.60px"></div>
<div class="t" style="left:21.70px;top:307.15px;height:13.50px;line-height:13.50px;width:49.58px;transform:scaleX(0.944);transform-origin:0 50%;font-size:10.8px;">1631</div>
<div class="t" style="left:71.00px;top:307.15px;height:13.50px;line-height:13.50px;width:21.19px;transform:scaleX(0.944);transform-origin:0 50%;font-size:10.8px;">0</div>
<div class="t" style="left:92.82px;top:307.15px;height:13.50px;line-height:13.50px;width:12.18px;transform:scaleX(0.944);transform-origin:100% 50%;font-size:10.8px;text-align:right;">-1</div>
<div class="t" style="left:114.70px;top:307.15px;height:13.50px;line-height:13.50px;width:94.20px;font-size:10.5px;">龙窟</div>
<div class="t" style="left:211.20px;top:307.15px;height:13.50px;line-height:13.50px;width:31.78px;transform:scaleX(0.944);transform-origin:0 50%;font-size:10.8px;">0</div>
<div class="t" style="left:279.70px;top:307.15px;height:13.50px;line-height:13.50px;width:31.78px;transform:scaleX(0.944);transform-origin:0 50%;font-size:10.8px;">0</div>
<div class="t" style="left:328.60px;top:307.15px;height:13.50px;line-height:13.50px;width:127.12px;transform:scaleX(0.944);transform-origin:0 50%;font-size:10.8px;">2016-10-17 00:30:00</div>
<div class="t" style="left:462.60px;top:307.15px;height:13.50px;line-height:13.50px;width:127.12px;transform:scaleX(0.944);transform-origin:0 50%;font-size:10.8px;">2025-10-17 23:59:59</div>
<div class="t" style="left:641.00px;top:307.15px;height:13.50px;line-height:13.50px;width:111.23px;transform:scaleX(0.944);transform-origin:0 50%;font-size:10.8px;">Music_heishishenyuan.ogg</div>
<div class="t" style="left:748.00px;top:307.15px;height:13.50px;line-height:13.50px;width:42.37px;transform:scaleX(0.944);transform-origin:0 50%;font-size:10.8px;">53</div>
<div class="t" style="left:798.50px;top:307.15px;height:13.50px;line-height:13.50px;width:42.37px;transform:scaleX(0.944);transform-origin:0 50%;font-size:10.8px;">99</div>
<div class="t" style="left:879.90px;top:307.15px;height:13.50px;line-height:13.50px;width:127.12px;transform:scaleX(0.944);transform-origin:0 50%;font-size:10.8px;">set:ditu image:9</div>
<div class="tri" style="left:746.50px;top:305.98px"></div>
<div class="tri" style="left:797.00px;top:305.98px"></div>
<div class="t" style="left:21.70px;top:320.53px;height:13.50px;line-height:13.50px;width:49.58px;transform:scaleX(0.944);transform-origin:0 50%;font-size:10.8px;">1625</div>
<div class="t" style="left:71.00px;top:320.53px;height:13.50px;line-height:13.50px;width:21.19px;transform:scaleX(0.944);transform-origin:0 50%;font-size:10.8px;">0</div>
<div class="t" style="left:92.82px;top:320.53px;height:13.50px;line-height:13.50px;width:12.18px;transform:scaleX(0.944);transform-origin:100% 50%;font-size:10.8px;text-align:right;">-1</div>
<div class="t" style="left:114.70px;top:320.53px;height:13.50px;line-height:13.50px;width:94.20px;font-size:10.5px;">大唐国境</div>
<div class="t" style="left:211.20px;top:320.53px;height:13.50px;line-height:13.50px;width:31.78px;transform:scaleX(0.944);transform-origin:0 50%;font-size:10.8px;">0</div>
<div class="t" style="left:279.70px;top:320.53px;height:13.50px;line-height:13.50px;width:31.78px;transform:scaleX(0.944);transform-origin:0 50%;font-size:10.8px;">0</div>
<div class="t" style="left:328.60px;top:320.53px;height:13.50px;line-height:13.50px;width:127.12px;transform:scaleX(0.944);transform-origin:0 50%;font-size:10.8px;">2016-10-17 00:30:00</div>
<div class="t" style="left:462.60px;top:320.53px;height:13.50px;line-height:13.50px;width:127.12px;transform:scaleX(0.944);transform-origin:0 50%;font-size:10.8px;">2025-10-17 23:59:59</div>
<div class="t" style="left:641.00px;top:320.53px;height:13.50px;line-height:13.50px;width:111.23px;transform:scaleX(0.944);transform-origin:0 50%;font-size:10.8px;">Music_baofengcheng.ogg</div>
<div class="t" style="left:748.00px;top:320.53px;height:13.50px;line-height:13.50px;width:42.37px;transform:scaleX(0.944);transform-origin:0 50%;font-size:10.8px;">53</div>
<div class="t" style="left:798.50px;top:320.53px;height:13.50px;line-height:13.50px;width:42.37px;transform:scaleX(0.944);transform-origin:0 50%;font-size:10.8px;">99</div>
<div class="t" style="left:879.90px;top:320.53px;height:13.50px;line-height:13.50px;width:127.12px;transform:scaleX(0.944);transform-origin:0 50%;font-size:10.8px;">set:ditu image:6</div>
<div class="tri" style="left:746.50px;top:319.35px"></div>
<div class="tri" style="left:797.00px;top:319.35px"></div>
<div class="t" style="left:21.70px;top:333.90px;height:13.50px;line-height:13.50px;width:49.58px;transform:scaleX(0.944);transform-origin:0 50%;font-size:10.8px;">1633</div>
<div class="t" style="left:71.00px;top:333.90px;height:13.50px;line-height:13.50px;width:21.19px;transform:scaleX(0.944);transform-origin:0 50%;font-size:10.8px;">0</div>
<div class="t" style="left:92.82px;top:333.90px;height:13.50px;line-height:13.50px;width:12.18px;transform:scaleX(0.944);transform-origin:100% 50%;font-size:10.8px;text-align:right;">-1</div>
<div class="t" style="left:114.70px;top:333.90px;height:13.50px;line-height:13.50px;width:94.20px;font-size:10.5px;">无名鬼域</div>
<div class="t" style="left:211.20px;top:333.90px;height:13.50px;line-height:13.50px;width:31.78px;transform:scaleX(0.944);transform-origin:0 50%;font-size:10.8px;">0</div>
<div class="t" style="left:279.70px;top:333.90px;height:13.50px;line-height:13.50px;width:31.78px;transform:scaleX(0.944);transform-origin:0 50%;font-size:10.8px;">0</div>
<div class="t" style="left:328.60px;top:333.90px;height:13.50px;line-height:13.50px;width:127.12px;transform:scaleX(0.944);transform-origin:0 50%;font-size:10.8px;">2016-10-17 00:30:00</div>
<div class="t" style="left:462.60px;top:333.90px;height:13.50px;line-height:13.50px;width:127.12px;transform:scaleX(0.944);transform-origin:0 50%;font-size:10.8px;">2025-10-17 23:59:59</div>
<div class="t" style="left:641.00px;top:333.90px;height:13.50px;line-height:13.50px;width:111.23px;transform:scaleX(0.944);transform-origin:0 50%;font-size:10.8px;">Music_sikuang.ogg</div>
<div class="t" style="left:748.00px;top:333.90px;height:13.50px;line-height:13.50px;width:42.37px;transform:scaleX(0.944);transform-origin:0 50%;font-size:10.8px;">53</div>
<div class="t" style="left:798.50px;top:333.90px;height:13.50px;line-height:13.50px;width:42.37px;transform:scaleX(0.944);transform-origin:0 50%;font-size:10.8px;">99</div>
<div class="t" style="left:879.90px;top:333.90px;height:13.50px;line-height:13.50px;width:127.12px;transform:scaleX(0.944);transform-origin:0 50%;font-size:10.8px;">set:ditu image:20</div>
<div class="tri" style="left:746.50px;top:332.73px"></div>
<div class="tri" style="left:797.00px;top:332.73px"></div>
<div class="t" style="left:21.70px;top:347.00px;height:13.50px;line-height:13.50px;width:49.58px;transform:scaleX(0.944);transform-origin:0 50%;font-size:10.8px;">2023</div>
<div class="t" style="left:71.00px;top:347.00px;height:13.50px;line-height:13.50px;width:21.19px;transform:scaleX(0.944);transform-origin:0 50%;font-size:10.8px;">0</div>
<div class="t" style="left:92.82px;top:347.00px;height:13.50px;line-height:13.50px;width:12.18px;transform:scaleX(0.944);transform-origin:100% 50%;font-size:10.8px;text-align:right;">-1</div>
<div class="t" style="left:114.70px;top:347.00px;height:13.50px;line-height:13.50px;width:94.20px;font-size:10.5px;">大唐境外</div>
<div class="t" style="left:211.20px;top:347.00px;height:13.50px;line-height:13.50px;width:31.78px;transform:scaleX(0.944);transform-origin:0 50%;font-size:10.8px;">0</div>
<div class="t" style="left:279.70px;top:347.00px;height:13.50px;line-height:13.50px;width:31.78px;transform:scaleX(0.944);transform-origin:0 50%;font-size:10.8px;">0</div>
<div class="t" style="left:328.60px;top:347.00px;height:13.50px;line-height:13.50px;width:127.12px;transform:scaleX(0.944);transform-origin:0 50%;font-size:10.8px;">2016-10-17 00:30:00</div>
<div class="t" style="left:462.60px;top:347.00px;height:13.50px;line-height:13.50px;width:127.12px;transform:scaleX(0.944);transform-origin:0 50%;font-size:10.8px;">2025-10-17 23:59:59</div>
<div class="t" style="left:641.00px;top:347.00px;height:13.50px;line-height:13.50px;width:111.23px;transform:scaleX(0.944);transform-origin:0 50%;font-size:10.8px;">Music_baofengcheng.ogg</div>
<div class="t" style="left:748.00px;top:347.00px;height:13.50px;line-height:13.50px;width:42.37px;transform:scaleX(0.944);transform-origin:0 50%;font-size:10.8px;">53</div>
<div class="t" style="left:798.50px;top:347.00px;height:13.50px;line-height:13.50px;width:42.37px;transform:scaleX(0.944);transform-origin:0 50%;font-size:10.8px;">99</div>
<div class="t" style="left:879.90px;top:347.00px;height:13.50px;line-height:13.50px;width:127.12px;transform:scaleX(0.944);transform-origin:0 50%;font-size:10.8px;">set:ditu image:6</div>
<div class="tri" style="left:746.50px;top:346.10px"></div>
<div class="tri" style="left:797.00px;top:346.10px"></div>
<div class="t" style="left:21.70px;top:360.70px;height:13.50px;line-height:13.50px;width:49.58px;transform:scaleX(0.944);transform-origin:0 50%;font-size:10.8px;">8080</div>
<div class="t" style="left:71.00px;top:360.70px;height:13.50px;line-height:13.50px;width:21.19px;transform:scaleX(0.944);transform-origin:0 50%;font-size:10.8px;">0</div>
<div class="t" style="left:92.82px;top:360.70px;height:13.50px;line-height:13.50px;width:12.18px;transform:scaleX(0.944);transform-origin:100% 50%;font-size:10.8px;text-align:right;">-1</div>
<div class="t" style="left:114.70px;top:360.70px;height:13.50px;line-height:13.50px;width:94.20px;font-size:10.5px;">女娲圣地</div>
<div class="t" style="left:211.20px;top:360.70px;height:13.50px;line-height:13.50px;width:31.78px;transform:scaleX(0.944);transform-origin:0 50%;font-size:10.8px;">0</div>
<div class="t" style="left:279.70px;top:360.70px;height:13.50px;line-height:13.50px;width:31.78px;transform:scaleX(0.944);transform-origin:0 50%;font-size:10.8px;">0</div>
<div class="t" style="left:328.60px;top:360.70px;height:13.50px;line-height:13.50px;width:127.12px;transform:scaleX(0.944);transform-origin:0 50%;font-size:10.8px;">2016-10-17 00:30:00</div>
<div class="t" style="left:462.60px;top:360.70px;height:13.50px;line-height:13.50px;width:127.12px;transform:scaleX(0.944);transform-origin:0 50%;font-size:10.8px;">2025-10-17 23:59:59</div>
<div class="t" style="left:641.00px;top:360.70px;height:13.50px;line-height:13.50px;width:111.23px;transform:scaleX(0.944);transform-origin:0 50%;font-size:10.8px;">changan.ogg</div>
<div class="t" style="left:748.00px;top:360.70px;height:13.50px;line-height:13.50px;width:42.37px;transform:scaleX(0.944);transform-origin:0 50%;font-size:10.8px;">59</div>
<div class="t" style="left:798.50px;top:360.70px;height:13.50px;line-height:13.50px;width:42.37px;transform:scaleX(0.944);transform-origin:0 50%;font-size:10.8px;">48</div>
<div class="t" style="left:879.90px;top:360.70px;height:13.50px;line-height:13.50px;width:127.12px;transform:scaleX(0.944);transform-origin:0 50%;font-size:10.8px;">set:ditu image:18</div>
<div class="t" style="left:21.70px;top:374.40px;height:13.50px;line-height:13.50px;width:49.58px;transform:scaleX(0.944);transform-origin:0 50%;font-size:10.8px;">8081</div>
<div class="t" style="left:71.00px;top:374.40px;height:13.50px;line-height:13.50px;width:21.19px;transform:scaleX(0.944);transform-origin:0 50%;font-size:10.8px;">0</div>
<div class="t" style="left:92.82px;top:374.40px;height:13.50px;line-height:13.50px;width:12.18px;transform:scaleX(0.944);transform-origin:100% 50%;font-size:10.8px;text-align:right;">-1</div>
<div class="t" style="left:114.70px;top:374.40px;height:13.50px;line-height:13.50px;width:94.20px;font-size:10.5px;">白银赞助（福利）</div>
<div class="t" style="left:211.20px;top:374.40px;height:13.50px;line-height:13.50px;width:31.78px;transform:scaleX(0.944);transform-origin:0 50%;font-size:10.8px;">0</div>
<div class="t" style="left:279.70px;top:374.40px;height:13.50px;line-height:13.50px;width:31.78px;transform:scaleX(0.944);transform-origin:0 50%;font-size:10.8px;">0</div>
<div class="t" style="left:328.60px;top:374.40px;height:13.50px;line-height:13.50px;width:127.12px;transform:scaleX(0.944);transform-origin:0 50%;font-size:10.8px;">2016-10-17 00:30:00</div>
<div class="t" style="left:462.60px;top:374.40px;height:13.50px;line-height:13.50px;width:127.12px;transform:scaleX(0.944);transform-origin:0 50%;font-size:10.8px;">2025-10-17 23:59:59</div>
<div class="t" style="left:641.00px;top:374.40px;height:13.50px;line-height:13.50px;width:111.23px;transform:scaleX(0.944);transform-origin:0 50%;font-size:10.8px;">changan.ogg</div>
<div class="t" style="left:748.00px;top:374.40px;height:13.50px;line-height:13.50px;width:42.37px;transform:scaleX(0.944);transform-origin:0 50%;font-size:10.8px;">32</div>
<div class="t" style="left:798.50px;top:374.40px;height:13.50px;line-height:13.50px;width:42.37px;transform:scaleX(0.944);transform-origin:0 50%;font-size:10.8px;">39</div>
<div class="t" style="left:879.90px;top:374.40px;height:13.50px;line-height:13.50px;width:127.12px;transform:scaleX(0.944);transform-origin:0 50%;font-size:10.8px;">set:ditu image:18</div>
<div class="t" style="left:21.70px;top:391.10px;height:13.50px;line-height:13.50px;width:49.58px;transform:scaleX(0.944);transform-origin:0 50%;font-size:10.8px;">8082</div>
<div class="t" style="left:71.00px;top:391.10px;height:13.50px;line-height:13.50px;width:21.19px;transform:scaleX(0.944);transform-origin:0 50%;font-size:10.8px;">0</div>
<div class="t" style="left:92.82px;top:391.10px;height:13.50px;line-height:13.50px;width:12.18px;transform:scaleX(0.944);transform-origin:100% 50%;font-size:10.8px;text-align:right;">-1</div>
<div class="t" style="left:114.70px;top:391.10px;height:13.50px;line-height:13.50px;width:94.20px;font-size:10.5px;">黄金赞助（福利）</div>
<div class="t" style="left:211.20px;top:391.10px;height:13.50px;line-height:13.50px;width:31.78px;transform:scaleX(0.944);transform-origin:0 50%;font-size:10.8px;">0</div>
<div class="t" style="left:279.70px;top:391.10px;height:13.50px;line-height:13.50px;width:31.78px;transform:scaleX(0.944);transform-origin:0 50%;font-size:10.8px;">0</div>
<div class="t" style="left:328.60px;top:391.10px;height:13.50px;line-height:13.50px;width:127.12px;transform:scaleX(0.944);transform-origin:0 50%;font-size:10.8px;">2016-10-17 00:30:00</div>
<div class="t" style="left:462.60px;top:391.10px;height:13.50px;line-height:13.50px;width:127.12px;transform:scaleX(0.944);transform-origin:0 50%;font-size:10.8px;">2025-10-17 23:59:59</div>
<div class="t" style="left:641.00px;top:391.10px;height:13.50px;line-height:13.50px;width:111.23px;transform:scaleX(0.944);transform-origin:0 50%;font-size:10.8px;">Music_sikuang.ogg</div>
<div class="t" style="left:748.00px;top:391.10px;height:13.50px;line-height:13.50px;width:42.37px;transform:scaleX(0.944);transform-origin:0 50%;font-size:10.8px;">131</div>
<div class="t" style="left:798.50px;top:391.10px;height:13.50px;line-height:13.50px;width:42.37px;transform:scaleX(0.944);transform-origin:0 50%;font-size:10.8px;">77</div>
<div class="t" style="left:879.90px;top:391.10px;height:13.50px;line-height:13.50px;width:127.12px;transform:scaleX(0.944);transform-origin:0 50%;font-size:10.8px;">set:ditu image:20</div>
<div class="t" style="left:21.70px;top:404.60px;height:13.50px;line-height:13.50px;width:49.58px;transform:scaleX(0.944);transform-origin:0 50%;font-size:10.8px;">8083</div>
<div class="t" style="left:71.00px;top:404.60px;height:13.50px;line-height:13.50px;width:21.19px;transform:scaleX(0.944);transform-origin:0 50%;font-size:10.8px;">0</div>
<div class="t" style="left:92.82px;top:404.60px;height:13.50px;line-height:13.50px;width:12.18px;transform:scaleX(0.944);transform-origin:100% 50%;font-size:10.8px;text-align:right;">-1</div>
<div class="t" style="left:114.70px;top:404.60px;height:13.50px;line-height:13.50px;width:94.20px;font-size:10.5px;">终极地图（灵饰）庚</div>
<div class="t" style="left:211.20px;top:404.60px;height:13.50px;line-height:13.50px;width:31.78px;transform:scaleX(0.944);transform-origin:0 50%;font-size:10.8px;">0</div>
<div class="t" style="left:279.70px;top:404.60px;height:13.50px;line-height:13.50px;width:31.78px;transform:scaleX(0.944);transform-origin:0 50%;font-size:10.8px;">0</div>
<div class="t" style="left:328.60px;top:404.60px;height:13.50px;line-height:13.50px;width:127.12px;transform:scaleX(0.944);transform-origin:0 50%;font-size:10.8px;">2016-10-17 00:30:00</div>
<div class="t" style="left:462.60px;top:404.60px;height:13.50px;line-height:13.50px;width:127.12px;transform:scaleX(0.944);transform-origin:0 50%;font-size:10.8px;">2025-10-17 23:59:59</div>
<div class="t" style="left:641.00px;top:404.60px;height:13.50px;line-height:13.50px;width:111.23px;transform:scaleX(0.944);transform-origin:0 50%;font-size:10.8px;">changan.ogg</div>
<div class="t" style="left:748.00px;top:404.60px;height:13.50px;line-height:13.50px;width:42.37px;transform:scaleX(0.944);transform-origin:0 50%;font-size:10.8px;">131</div>
<div class="t" style="left:798.50px;top:404.60px;height:13.50px;line-height:13.50px;width:42.37px;transform:scaleX(0.944);transform-origin:0 50%;font-size:10.8px;">77</div>
<div class="t" style="left:879.90px;top:404.60px;height:13.50px;line-height:13.50px;width:127.12px;transform:scaleX(0.944);transform-origin:0 50%;font-size:10.8px;">set:ditu image:18</div>
<div class="t" style="left:21.70px;top:418.10px;height:13.50px;line-height:13.50px;width:49.58px;transform:scaleX(0.944);transform-origin:0 50%;font-size:10.8px;">8084</div>
<div class="t" style="left:71.00px;top:418.10px;height:13.50px;line-height:13.50px;width:21.19px;transform:scaleX(0.944);transform-origin:0 50%;font-size:10.8px;">0</div>
<div class="t" style="left:92.82px;top:418.10px;height:13.50px;line-height:13.50px;width:12.18px;transform:scaleX(0.944);transform-origin:100% 50%;font-size:10.8px;text-align:right;">-1</div>
<div class="t" style="left:114.70px;top:418.10px;height:13.50px;line-height:13.50px;width:94.20px;font-size:10.5px;">铂金赞助（福利）</div>
<div class="t" style="left:211.20px;top:418.10px;height:13.50px;line-height:13.50px;width:31.78px;transform:scaleX(0.944);transform-origin:0 50%;font-size:10.8px;">0</div>
<div class="t" style="left:279.70px;top:418.10px;height:13.50px;line-height:13.50px;width:31.78px;transform:scaleX(0.944);transform-origin:0 50%;font-size:10.8px;">0</div>
<div class="t" style="left:328.60px;top:418.10px;height:13.50px;line-height:13.50px;width:127.12px;transform:scaleX(0.944);transform-origin:0 50%;font-size:10.8px;">2016-10-17 00:30:00</div>
<div class="t" style="left:462.60px;top:418.10px;height:13.50px;line-height:13.50px;width:127.12px;transform:scaleX(0.944);transform-origin:0 50%;font-size:10.8px;">2025-10-17 23:59:59</div>
<div class="t" style="left:641.00px;top:418.10px;height:13.50px;line-height:13.50px;width:111.23px;transform:scaleX(0.944);transform-origin:0 50%;font-size:10.8px;">changan.ogg</div>
<div class="t" style="left:748.00px;top:418.10px;height:13.50px;line-height:13.50px;width:42.37px;transform:scaleX(0.944);transform-origin:0 50%;font-size:10.8px;">131</div>
<div class="t" style="left:798.50px;top:418.10px;height:13.50px;line-height:13.50px;width:42.37px;transform:scaleX(0.944);transform-origin:0 50%;font-size:10.8px;">77</div>
<div class="t" style="left:879.90px;top:418.10px;height:13.50px;line-height:13.50px;width:127.12px;transform:scaleX(0.944);transform-origin:0 50%;font-size:10.8px;">set:ditu image:18</div>
<div class="t" style="left:21.70px;top:431.60px;height:13.50px;line-height:13.50px;width:49.58px;transform:scaleX(0.944);transform-origin:0 50%;font-size:10.8px;">8085</div>
<div class="t" style="left:71.00px;top:431.60px;height:13.50px;line-height:13.50px;width:21.19px;transform:scaleX(0.944);transform-origin:0 50%;font-size:10.8px;">0</div>
<div class="t" style="left:92.82px;top:431.60px;height:13.50px;line-height:13.50px;width:12.18px;transform:scaleX(0.944);transform-origin:100% 50%;font-size:10.8px;text-align:right;">-1</div>
<div class="t" style="left:114.70px;top:431.60px;height:13.50px;line-height:13.50px;width:94.20px;font-size:10.5px;">钻石赞助（福利）</div>
<div class="t" style="left:211.20px;top:431.60px;height:13.50px;line-height:13.50px;width:31.78px;transform:scaleX(0.944);transform-origin:0 50%;font-size:10.8px;">0</div>
<div class="t" style="left:279.70px;top:431.60px;height:13.50px;line-height:13.50px;width:31.78px;transform:scaleX(0.944);transform-origin:0 50%;font-size:10.8px;">0</div>
<div class="t" style="left:328.60px;top:431.60px;height:13.50px;line-height:13.50px;width:127.12px;transform:scaleX(0.944);transform-origin:0 50%;font-size:10.8px;">2016-10-17 00:30:00</div>
<div class="t" style="left:462.60px;top:431.60px;height:13.50px;line-height:13.50px;width:127.12px;transform:scaleX(0.944);transform-origin:0 50%;font-size:10.8px;">2025-10-17 23:59:59</div>
<div class="t" style="left:641.00px;top:431.60px;height:13.50px;line-height:13.50px;width:111.23px;transform:scaleX(0.944);transform-origin:0 50%;font-size:10.8px;">changan.ogg</div>
<div class="t" style="left:748.00px;top:431.60px;height:13.50px;line-height:13.50px;width:42.37px;transform:scaleX(0.944);transform-origin:0 50%;font-size:10.8px;">131</div>
<div class="t" style="left:798.50px;top:431.60px;height:13.50px;line-height:13.50px;width:42.37px;transform:scaleX(0.944);transform-origin:0 50%;font-size:10.8px;">77</div>
<div class="t" style="left:879.90px;top:431.60px;height:13.50px;line-height:13.50px;width:127.12px;transform:scaleX(0.944);transform-origin:0 50%;font-size:10.8px;">set:ditu image:18</div>
<div class="t" style="left:21.70px;top:445.10px;height:13.50px;line-height:13.50px;width:49.58px;transform:scaleX(0.944);transform-origin:0 50%;font-size:10.8px;">8086</div>
<div class="t" style="left:71.00px;top:445.10px;height:13.50px;line-height:13.50px;width:21.19px;transform:scaleX(0.944);transform-origin:0 50%;font-size:10.8px;">0</div>
<div class="t" style="left:92.82px;top:445.10px;height:13.50px;line-height:13.50px;width:12.18px;transform:scaleX(0.944);transform-origin:100% 50%;font-size:10.8px;text-align:right;">-1</div>
<div class="t" style="left:114.70px;top:445.10px;height:13.50px;line-height:13.50px;width:94.20px;font-size:10.5px;">修罗塔一层</div>
<div class="t" style="left:211.20px;top:445.10px;height:13.50px;line-height:13.50px;width:31.78px;transform:scaleX(0.944);transform-origin:0 50%;font-size:10.8px;">0</div>
<div class="t" style="left:279.70px;top:445.10px;height:13.50px;line-height:13.50px;width:31.78px;transform:scaleX(0.944);transform-origin:0 50%;font-size:10.8px;">0</div>
<div class="t" style="left:328.60px;top:445.10px;height:13.50px;line-height:13.50px;width:127.12px;transform:scaleX(0.944);transform-origin:0 50%;font-size:10.8px;">2016-10-17 00:30:00</div>
<div class="t" style="left:462.60px;top:445.10px;height:13.50px;line-height:13.50px;width:127.12px;transform:scaleX(0.944);transform-origin:0 50%;font-size:10.8px;">2025-10-17 23:59:59</div>
<div class="t" style="left:641.00px;top:445.10px;height:13.50px;line-height:13.50px;width:111.23px;transform:scaleX(0.944);transform-origin:0 50%;font-size:10.8px;">biwuchang.ogg</div>
<div class="t" style="left:748.00px;top:445.10px;height:13.50px;line-height:13.50px;width:42.37px;transform:scaleX(0.944);transform-origin:0 50%;font-size:10.8px;">93</div>
<div class="t" style="left:798.50px;top:445.10px;height:13.50px;line-height:13.50px;width:42.37px;transform:scaleX(0.944);transform-origin:0 50%;font-size:10.8px;">70</div>
<div class="t" style="left:879.90px;top:445.10px;height:13.50px;line-height:13.50px;width:127.12px;transform:scaleX(0.944);transform-origin:0 50%;font-size:10.8px;">set:ditu image:18</div>
<div class="t" style="left:21.70px;top:458.60px;height:13.50px;line-height:13.50px;width:49.58px;transform:scaleX(0.944);transform-origin:0 50%;font-size:10.8px;">8087</div>
<div class="t" style="left:71.00px;top:458.60px;height:13.50px;line-height:13.50px;width:21.19px;transform:scaleX(0.944);transform-origin:0 50%;font-size:10.8px;">0</div>
<div class="t" style="left:92.82px;top:458.60px;height:13.50px;line-height:13.50px;width:12.18px;transform:scaleX(0.944);transform-origin:100% 50%;font-size:10.8px;text-align:right;">-1</div>
<div class="t" style="left:114.70px;top:458.60px;height:13.50px;line-height:13.50px;width:94.20px;font-size:10.5px;">修罗塔二层</div>
<div class="t" style="left:211.20px;top:458.60px;height:13.50px;line-height:13.50px;width:31.78px;transform:scaleX(0.944);transform-origin:0 50%;font-size:10.8px;">0</div>
<div class="t" style="left:279.70px;top:458.60px;height:13.50px;line-height:13.50px;width:31.78px;transform:scaleX(0.944);transform-origin:0 50%;font-size:10.8px;">0</div>
<div class="t" style="left:328.60px;top:458.60px;height:13.50px;line-height:13.50px;width:127.12px;transform:scaleX(0.944);transform-origin:0 50%;font-size:10.8px;">2016-10-17 00:30:00</div>
<div class="t" style="left:462.60px;top:458.60px;height:13.50px;line-height:13.50px;width:127.12px;transform:scaleX(0.944);transform-origin:0 50%;font-size:10.8px;">2025-10-17 23:59:59</div>
<div class="t" style="left:641.00px;top:458.60px;height:13.50px;line-height:13.50px;width:111.23px;transform:scaleX(0.944);transform-origin:0 50%;font-size:10.8px;">biwuchang.ogg</div>
<div class="t" style="left:748.00px;top:458.60px;height:13.50px;line-height:13.50px;width:42.37px;transform:scaleX(0.944);transform-origin:0 50%;font-size:10.8px;">35</div>
<div class="t" style="left:798.50px;top:458.60px;height:13.50px;line-height:13.50px;width:42.37px;transform:scaleX(0.944);transform-origin:0 50%;font-size:10.8px;">55</div>
<div class="t" style="left:879.90px;top:458.60px;height:13.50px;line-height:13.50px;width:127.12px;transform:scaleX(0.944);transform-origin:0 50%;font-size:10.8px;">set:ditu image:18</div>
<div class="t" style="left:21.70px;top:472.10px;height:13.50px;line-height:13.50px;width:49.58px;transform:scaleX(0.944);transform-origin:0 50%;font-size:10.8px;">8088</div>
<div class="t" style="left:71.00px;top:472.10px;height:13.50px;line-height:13.50px;width:21.19px;transform:scaleX(0.944);transform-origin:0 50%;font-size:10.8px;">0</div>
<div class="t" style="left:92.82px;top:472.10px;height:13.50px;line-height:13.50px;width:12.18px;transform:scaleX(0.944);transform-origin:100% 50%;font-size:10.8px;text-align:right;">-1</div>
<div class="t" style="left:114.70px;top:472.10px;height:13.50px;line-height:13.50px;width:94.20px;font-size:10.5px;">修罗塔三层</div>
<div class="t" style="left:211.20px;top:472.10px;height:13.50px;line-height:13.50px;width:31.78px;transform:scaleX(0.944);transform-origin:0 50%;font-size:10.8px;">0</div>
<div class="t" style="left:279.70px;top:472.10px;height:13.50px;line-height:13.50px;width:31.78px;transform:scaleX(0.944);transform-origin:0 50%;font-size:10.8px;">0</div>
<div class="t" style="left:328.60px;top:472.10px;height:13.50px;line-height:13.50px;width:127.12px;transform:scaleX(0.944);transform-origin:0 50%;font-size:10.8px;">2016-10-17 00:30:00</div>
<div class="t" style="left:462.60px;top:472.10px;height:13.50px;line-height:13.50px;width:127.12px;transform:scaleX(0.944);transform-origin:0 50%;font-size:10.8px;">2025-10-17 23:59:59</div>
<div class="t" style="left:641.00px;top:472.10px;height:13.50px;line-height:13.50px;width:111.23px;transform:scaleX(0.944);transform-origin:0 50%;font-size:10.8px;">biwuchang.ogg</div>
<div class="t" style="left:748.00px;top:472.10px;height:13.50px;line-height:13.50px;width:42.37px;transform:scaleX(0.944);transform-origin:0 50%;font-size:10.8px;">53</div>
<div class="t" style="left:798.50px;top:472.10px;height:13.50px;line-height:13.50px;width:42.37px;transform:scaleX(0.944);transform-origin:0 50%;font-size:10.8px;">99</div>
<div class="t" style="left:879.90px;top:472.10px;height:13.50px;line-height:13.50px;width:127.12px;transform:scaleX(0.944);transform-origin:0 50%;font-size:10.8px;">set:ditu image:18</div>
<div class="tri" style="left:746.50px;top:470.80px"></div>
<div class="tri" style="left:797.00px;top:470.80px"></div>
<div class="t" style="left:21.70px;top:485.60px;height:13.50px;line-height:13.50px;width:49.58px;transform:scaleX(0.944);transform-origin:0 50%;font-size:10.8px;">8089</div>
<div class="t" style="left:71.00px;top:485.60px;height:13.50px;line-height:13.50px;width:21.19px;transform:scaleX(0.944);transform-origin:0 50%;font-size:10.8px;">0</div>
<div class="t" style="left:92.82px;top:485.60px;height:13.50px;line-height:13.50px;width:12.18px;transform:scaleX(0.944);transform-origin:100% 50%;font-size:10.8px;text-align:right;">-1</div>
<div class="t" style="left:114.70px;top:485.60px;height:13.50px;line-height:13.50px;width:94.20px;font-size:10.5px;">修罗塔四层</div>
<div class="t" style="left:211.20px;top:485.60px;height:13.50px;line-height:13.50px;width:31.78px;transform:scaleX(0.944);transform-origin:0 50%;font-size:10.8px;">0</div>
<div class="t" style="left:279.70px;top:485.60px;height:13.50px;line-height:13.50px;width:31.78px;transform:scaleX(0.944);transform-origin:0 50%;font-size:10.8px;">0</div>
<div class="t" style="left:328.60px;top:485.60px;height:13.50px;line-height:13.50px;width:127.12px;transform:scaleX(0.944);transform-origin:0 50%;font-size:10.8px;">2016-10-17 00:30:00</div>
<div class="t" style="left:462.60px;top:485.60px;height:13.50px;line-height:13.50px;width:127.12px;transform:scaleX(0.944);transform-origin:0 50%;font-size:10.8px;">2025-10-17 23:59:59</div>
<div class="t" style="left:641.00px;top:485.60px;height:13.50px;line-height:13.50px;width:111.23px;transform:scaleX(0.944);transform-origin:0 50%;font-size:10.8px;">biwuchang.ogg</div>
<div class="t" style="left:748.00px;top:485.60px;height:13.50px;line-height:13.50px;width:42.37px;transform:scaleX(0.944);transform-origin:0 50%;font-size:10.8px;">53</div>
<div class="t" style="left:798.50px;top:485.60px;height:13.50px;line-height:13.50px;width:42.37px;transform:scaleX(0.944);transform-origin:0 50%;font-size:10.8px;">99</div>
<div class="t" style="left:879.90px;top:485.60px;height:13.50px;line-height:13.50px;width:127.12px;transform:scaleX(0.944);transform-origin:0 50%;font-size:10.8px;">set:ditu image:18</div>
<div class="tri" style="left:746.50px;top:484.30px"></div>
<div class="tri" style="left:797.00px;top:484.30px"></div>
<div class="t" style="left:21.70px;top:499.10px;height:13.50px;line-height:13.50px;width:49.58px;transform:scaleX(0.944);transform-origin:0 50%;font-size:10.8px;">8090</div>
<div class="t" style="left:71.00px;top:499.10px;height:13.50px;line-height:13.50px;width:21.19px;transform:scaleX(0.944);transform-origin:0 50%;font-size:10.8px;">0</div>
<div class="t" style="left:92.82px;top:499.10px;height:13.50px;line-height:13.50px;width:12.18px;transform:scaleX(0.944);transform-origin:100% 50%;font-size:10.8px;text-align:right;">-1</div>
<div class="t" style="left:114.70px;top:499.10px;height:13.50px;line-height:13.50px;width:94.20px;font-size:10.5px;">修罗塔五层</div>
<div class="t" style="left:211.20px;top:499.10px;height:13.50px;line-height:13.50px;width:31.78px;transform:scaleX(0.944);transform-origin:0 50%;font-size:10.8px;">0</div>
<div class="t" style="left:279.70px;top:499.10px;height:13.50px;line-height:13.50px;width:31.78px;transform:scaleX(0.944);transform-origin:0 50%;font-size:10.8px;">0</div>
<div class="t" style="left:328.60px;top:499.10px;height:13.50px;line-height:13.50px;width:127.12px;transform:scaleX(0.944);transform-origin:0 50%;font-size:10.8px;">2016-10-17 00:30:00</div>
<div class="t" style="left:462.60px;top:499.10px;height:13.50px;line-height:13.50px;width:127.12px;transform:scaleX(0.944);transform-origin:0 50%;font-size:10.8px;">2025-10-17 23:59:59</div>
<div class="t" style="left:641.00px;top:499.10px;height:13.50px;line-height:13.50px;width:111.23px;transform:scaleX(0.944);transform-origin:0 50%;font-size:10.8px;">biwuchang.ogg</div>
<div class="t" style="left:748.00px;top:499.10px;height:13.50px;line-height:13.50px;width:42.37px;transform:scaleX(0.944);transform-origin:0 50%;font-size:10.8px;">53</div>
<div class="t" style="left:798.50px;top:499.10px;height:13.50px;line-height:13.50px;width:42.37px;transform:scaleX(0.944);transform-origin:0 50%;font-size:10.8px;">99</div>
<div class="t" style="left:879.90px;top:499.10px;height:13.50px;line-height:13.50px;width:127.12px;transform:scaleX(0.944);transform-origin:0 50%;font-size:10.8px;">set:ditu image:18</div>
<div class="tri" style="left:746.50px;top:497.80px"></div>
<div class="tri" style="left:797.00px;top:497.80px"></div>
<div class="t" style="left:21.70px;top:512.60px;height:13.50px;line-height:13.50px;width:49.58px;transform:scaleX(0.944);transform-origin:0 50%;font-size:10.8px;">8091</div>
<div class="t" style="left:71.00px;top:512.60px;height:13.50px;line-height:13.50px;width:21.19px;transform:scaleX(0.944);transform-origin:0 50%;font-size:10.8px;">0</div>
<div class="t" style="left:92.82px;top:512.60px;height:13.50px;line-height:13.50px;width:12.18px;transform:scaleX(0.944);transform-origin:100% 50%;font-size:10.8px;text-align:right;">-1</div>
<div class="t" style="left:114.70px;top:512.60px;height:13.50px;line-height:13.50px;width:94.20px;font-size:10.5px;">修罗塔六层</div>
<div class="t" style="left:211.20px;top:512.60px;height:13.50px;line-height:13.50px;width:31.78px;transform:scaleX(0.944);transform-origin:0 50%;font-size:10.8px;">0</div>
<div class="t" style="left:279.70px;top:512.60px;height:13.50px;line-height:13.50px;width:31.78px;transform:scaleX(0.944);transform-origin:0 50%;font-size:10.8px;">0</div>
<div class="t" style="left:328.60px;top:512.60px;height:13.50px;line-height:13.50px;width:127.12px;transform:scaleX(0.944);transform-origin:0 50%;font-size:10.8px;">2016-10-17 00:30:00</div>
<div class="t" style="left:462.60px;top:512.60px;height:13.50px;line-height:13.50px;width:127.12px;transform:scaleX(0.944);transform-origin:0 50%;font-size:10.8px;">2025-10-17 23:59:59</div>
<div class="t" style="left:641.00px;top:512.60px;height:13.50px;line-height:13.50px;width:111.23px;transform:scaleX(0.944);transform-origin:0 50%;font-size:10.8px;">biwuchang.ogg</div>
<div class="t" style="left:748.00px;top:512.60px;height:13.50px;line-height:13.50px;width:42.37px;transform:scaleX(0.944);transform-origin:0 50%;font-size:10.8px;">53</div>
<div class="t" style="left:798.50px;top:512.60px;height:13.50px;line-height:13.50px;width:42.37px;transform:scaleX(0.944);transform-origin:0 50%;font-size:10.8px;">99</div>
<div class="t" style="left:879.90px;top:512.60px;height:13.50px;line-height:13.50px;width:127.12px;transform:scaleX(0.944);transform-origin:0 50%;font-size:10.8px;">set:ditu image:18</div>
<div class="tri" style="left:746.50px;top:511.30px"></div>
<div class="tri" style="left:797.00px;top:511.30px"></div>
<div class="t" style="left:21.70px;top:526.10px;height:13.50px;line-height:13.50px;width:49.58px;transform:scaleX(0.944);transform-origin:0 50%;font-size:10.8px;">8092</div>
<div class="t" style="left:71.00px;top:526.10px;height:13.50px;line-height:13.50px;width:21.19px;transform:scaleX(0.944);transform-origin:0 50%;font-size:10.8px;">0</div>
<div class="t" style="left:92.82px;top:526.10px;height:13.50px;line-height:13.50px;width:12.18px;transform:scaleX(0.944);transform-origin:100% 50%;font-size:10.8px;text-align:right;">-1</div>
<div class="t" style="left:114.70px;top:526.10px;height:13.50px;line-height:13.50px;width:94.20px;font-size:10.5px;">修罗塔七层</div>
<div class="t" style="left:211.20px;top:526.10px;height:13.50px;line-height:13.50px;width:31.78px;transform:scaleX(0.944);transform-origin:0 50%;font-size:10.8px;">0</div>
<div class="t" style="left:279.70px;top:526.10px;height:13.50px;line-height:13.50px;width:31.78px;transform:scaleX(0.944);transform-origin:0 50%;font-size:10.8px;">0</div>
<div class="t" style="left:328.60px;top:526.10px;height:13.50px;line-height:13.50px;width:127.12px;transform:scaleX(0.944);transform-origin:0 50%;font-size:10.8px;">2016-10-17 00:30:00</div>
<div class="t" style="left:462.60px;top:526.10px;height:13.50px;line-height:13.50px;width:127.12px;transform:scaleX(0.944);transform-origin:0 50%;font-size:10.8px;">2025-10-17 23:59:59</div>
<div class="t" style="left:641.00px;top:526.10px;height:13.50px;line-height:13.50px;width:111.23px;transform:scaleX(0.944);transform-origin:0 50%;font-size:10.8px;">biwuchang.ogg</div>
<div class="t" style="left:748.00px;top:526.10px;height:13.50px;line-height:13.50px;width:42.37px;transform:scaleX(0.944);transform-origin:0 50%;font-size:10.8px;">53</div>
<div class="t" style="left:798.50px;top:526.10px;height:13.50px;line-height:13.50px;width:42.37px;transform:scaleX(0.944);transform-origin:0 50%;font-size:10.8px;">99</div>
<div class="t" style="left:879.90px;top:526.10px;height:13.50px;line-height:13.50px;width:127.12px;transform:scaleX(0.944);transform-origin:0 50%;font-size:10.8px;">set:ditu image:18</div>
<div class="tri" style="left:746.50px;top:524.80px"></div>
<div class="tri" style="left:797.00px;top:524.80px"></div>
<div class="t" style="left:21.70px;top:539.60px;height:13.50px;line-height:13.50px;width:49.58px;transform:scaleX(0.944);transform-origin:0 50%;font-size:10.8px;">8093</div>
<div class="t" style="left:71.00px;top:539.60px;height:13.50px;line-height:13.50px;width:21.19px;transform:scaleX(0.944);transform-origin:0 50%;font-size:10.8px;">0</div>
<div class="t" style="left:92.82px;top:539.60px;height:13.50px;line-height:13.50px;width:12.18px;transform:scaleX(0.944);transform-origin:100% 50%;font-size:10.8px;text-align:right;">-1</div>
<div class="t" style="left:114.70px;top:539.60px;height:13.50px;line-height:13.50px;width:94.20px;font-size:10.5px;">修罗塔八层</div>
<div class="t" style="left:211.20px;top:539.60px;height:13.50px;line-height:13.50px;width:31.78px;transform:scaleX(0.944);transform-origin:0 50%;font-size:10.8px;">0</div>
<div class="t" style="left:279.70px;top:539.60px;height:13.50px;line-height:13.50px;width:31.78px;transform:scaleX(0.944);transform-origin:0 50%;font-size:10.8px;">0</div>
<div class="t" style="left:328.60px;top:539.60px;height:13.50px;line-height:13.50px;width:127.12px;transform:scaleX(0.944);transform-origin:0 50%;font-size:10.8px;">2016-10-17 00:30:00</div>
<div class="t" style="left:462.60px;top:539.60px;height:13.50px;line-height:13.50px;width:127.12px;transform:scaleX(0.944);transform-origin:0 50%;font-size:10.8px;">2025-10-17 23:59:59</div>
<div class="t" style="left:641.00px;top:539.60px;height:13.50px;line-height:13.50px;width:111.23px;transform:scaleX(0.944);transform-origin:0 50%;font-size:10.8px;">biwuchang.ogg</div>
<div class="t" style="left:748.00px;top:539.60px;height:13.50px;line-height:13.50px;width:42.37px;transform:scaleX(0.944);transform-origin:0 50%;font-size:10.8px;">53</div>
<div class="t" style="left:798.50px;top:539.60px;height:13.50px;line-height:13.50px;width:42.37px;transform:scaleX(0.944);transform-origin:0 50%;font-size:10.8px;">99</div>
<div class="t" style="left:879.90px;top:539.60px;height:13.50px;line-height:13.50px;width:127.12px;transform:scaleX(0.944);transform-origin:0 50%;font-size:10.8px;">set:ditu image:18</div>
<div class="tri" style="left:746.50px;top:538.30px"></div>
<div class="tri" style="left:797.00px;top:538.30px"></div>
<div class="t" style="left:21.70px;top:553.04px;height:13.50px;line-height:13.50px;width:49.58px;transform:scaleX(0.944);transform-origin:0 50%;font-size:10.8px;">8094</div>
<div class="t" style="left:71.00px;top:553.04px;height:13.50px;line-height:13.50px;width:21.19px;transform:scaleX(0.944);transform-origin:0 50%;font-size:10.8px;">0</div>
<div class="t" style="left:92.82px;top:553.04px;height:13.50px;line-height:13.50px;width:12.18px;transform:scaleX(0.944);transform-origin:100% 50%;font-size:10.8px;text-align:right;">-1</div>
<div class="t" style="left:114.70px;top:553.04px;height:13.50px;line-height:13.50px;width:94.20px;font-size:10.5px;">修罗塔巅峰</div>
<div class="t" style="left:211.20px;top:553.04px;height:13.50px;line-height:13.50px;width:31.78px;transform:scaleX(0.944);transform-origin:0 50%;font-size:10.8px;">0</div>
<div class="t" style="left:279.70px;top:553.04px;height:13.50px;line-height:13.50px;width:31.78px;transform:scaleX(0.944);transform-origin:0 50%;font-size:10.8px;">0</div>
<div class="t" style="left:328.60px;top:553.04px;height:13.50px;line-height:13.50px;width:127.12px;transform:scaleX(0.944);transform-origin:0 50%;font-size:10.8px;">2016-10-17 00:30:00</div>
<div class="t" style="left:462.60px;top:553.04px;height:13.50px;line-height:13.50px;width:127.12px;transform:scaleX(0.944);transform-origin:0 50%;font-size:10.8px;">2025-10-17 23:59:59</div>
<div class="t" style="left:641.00px;top:553.04px;height:13.50px;line-height:13.50px;width:111.23px;transform:scaleX(0.944);transform-origin:0 50%;font-size:10.8px;">biwuchang.ogg</div>
<div class="t" style="left:748.00px;top:553.04px;height:13.50px;line-height:13.50px;width:42.37px;transform:scaleX(0.944);transform-origin:0 50%;font-size:10.8px;">53</div>
<div class="t" style="left:798.50px;top:553.04px;height:13.50px;line-height:13.50px;width:42.37px;transform:scaleX(0.944);transform-origin:0 50%;font-size:10.8px;">99</div>
<div class="t" style="left:879.90px;top:553.04px;height:13.50px;line-height:13.50px;width:127.12px;transform:scaleX(0.944);transform-origin:0 50%;font-size:10.8px;">set:ditu image:18</div>
<div class="tri" style="left:746.50px;top:551.80px"></div>
<div class="tri" style="left:797.00px;top:551.80px"></div>
<div class="t" style="left:21.70px;top:566.47px;height:13.50px;line-height:13.50px;width:49.58px;transform:scaleX(0.944);transform-origin:0 50%;font-size:10.8px;">8200</div>
<div class="t" style="left:71.00px;top:566.47px;height:13.50px;line-height:13.50px;width:21.19px;transform:scaleX(0.944);transform-origin:0 50%;font-size:10.8px;">0</div>
<div class="t" style="left:92.82px;top:566.47px;height:13.50px;line-height:13.50px;width:12.18px;transform:scaleX(0.944);transform-origin:100% 50%;font-size:10.8px;text-align:right;">-1</div>
<div class="t" style="left:114.70px;top:566.47px;height:13.50px;line-height:13.50px;width:94.20px;font-size:10.5px;">魔龙来袭</div>
<div class="t" style="left:211.20px;top:566.47px;height:13.50px;line-height:13.50px;width:31.78px;transform:scaleX(0.944);transform-origin:0 50%;font-size:10.8px;">0</div>
<div class="t" style="left:279.70px;top:566.47px;height:13.50px;line-height:13.50px;width:31.78px;transform:scaleX(0.944);transform-origin:0 50%;font-size:10.8px;">0</div>
<div class="t" style="left:328.60px;top:566.47px;height:13.50px;line-height:13.50px;width:127.12px;transform:scaleX(0.944);transform-origin:0 50%;font-size:10.8px;">2016-10-17 00:30:00</div>
<div class="t" style="left:462.60px;top:566.47px;height:13.50px;line-height:13.50px;width:127.12px;transform:scaleX(0.944);transform-origin:0 50%;font-size:10.8px;">2025-10-17 23:59:59</div>
<div class="t" style="left:641.00px;top:566.47px;height:13.50px;line-height:13.50px;width:111.23px;transform:scaleX(0.944);transform-origin:0 50%;font-size:10.8px;">biwuchang.ogg</div>
<div class="t" style="left:748.00px;top:566.47px;height:13.50px;line-height:13.50px;width:42.37px;transform:scaleX(0.944);transform-origin:0 50%;font-size:10.8px;">65</div>
<div class="t" style="left:798.50px;top:566.47px;height:13.50px;line-height:13.50px;width:42.37px;transform:scaleX(0.944);transform-origin:0 50%;font-size:10.8px;">88</div>
<div class="t" style="left:879.90px;top:566.47px;height:13.50px;line-height:13.50px;width:127.12px;transform:scaleX(0.944);transform-origin:0 50%;font-size:10.8px;">set:ditu image:18</div>
<div class="t" style="left:21.70px;top:579.91px;height:13.50px;line-height:13.50px;width:49.58px;transform:scaleX(0.944);transform-origin:0 50%;font-size:10.8px;">9034</div>
<div class="t" style="left:71.00px;top:579.91px;height:13.50px;line-height:13.50px;width:21.19px;transform:scaleX(0.944);transform-origin:0 50%;font-size:10.8px;">0</div>
<div class="t" style="left:92.82px;top:579.91px;height:13.50px;line-height:13.50px;width:12.18px;transform:scaleX(0.944);transform-origin:100% 50%;font-size:10.8px;text-align:right;">-1</div>
<div class="t" style="left:114.70px;top:579.91px;height:13.50px;line-height:13.50px;width:94.20px;font-size:10.5px;">秘藏boss</div>
<div class="t" style="left:211.20px;top:579.91px;height:13.50px;line-height:13.50px;width:31.78px;transform:scaleX(0.944);transform-origin:0 50%;font-size:10.8px;">0</div>
<div class="t" style="left:279.70px;top:579.91px;height:13.50px;line-height:13.50px;width:31.78px;transform:scaleX(0.944);transform-origin:0 50%;font-size:10.8px;">0</div>
<div class="t" style="left:328.60px;top:579.91px;height:13.50px;line-height:13.50px;width:127.12px;transform:scaleX(0.944);transform-origin:0 50%;font-size:10.8px;">2016-10-17 00:30:00</div>
<div class="t" style="left:462.60px;top:579.91px;height:13.50px;line-height:13.50px;width:127.12px;transform:scaleX(0.944);transform-origin:0 50%;font-size:10.8px;">2025-10-17 23:59:59</div>
<div class="t" style="left:641.00px;top:579.91px;height:13.50px;line-height:13.50px;width:111.23px;transform:scaleX(0.944);transform-origin:0 50%;font-size:10.8px;">biwuchang.ogg</div>
<div class="t" style="left:748.00px;top:579.91px;height:13.50px;line-height:13.50px;width:42.37px;transform:scaleX(0.944);transform-origin:0 50%;font-size:10.8px;">128</div>
<div class="t" style="left:798.50px;top:579.91px;height:13.50px;line-height:13.50px;width:42.37px;transform:scaleX(0.944);transform-origin:0 50%;font-size:10.8px;">109</div>
<div class="t" style="left:879.90px;top:579.91px;height:13.50px;line-height:13.50px;width:127.12px;transform:scaleX(0.944);transform-origin:0 50%;font-size:10.8px;">set:ditu image:18</div>
<div class="t" style="left:21.70px;top:593.35px;height:13.50px;line-height:13.50px;width:49.58px;transform:scaleX(0.944);transform-origin:0 50%;font-size:10.8px;">8201</div>
<div class="t" style="left:71.00px;top:593.35px;height:13.50px;line-height:13.50px;width:21.19px;transform:scaleX(0.944);transform-origin:0 50%;font-size:10.8px;">0</div>
<div class="t" style="left:92.82px;top:593.35px;height:13.50px;line-height:13.50px;width:12.18px;transform:scaleX(0.944);transform-origin:100% 50%;font-size:10.8px;text-align:right;">-1</div>
<div class="t" style="left:114.70px;top:593.35px;height:13.50px;line-height:13.50px;width:94.20px;font-size:10.5px;">仙魔战场</div>
<div class="t" style="left:211.20px;top:593.35px;height:13.50px;line-height:13.50px;width:31.78px;transform:scaleX(0.944);transform-origin:0 50%;font-size:10.8px;">0</div>
<div class="t" style="left:279.70px;top:593.35px;height:13.50px;line-height:13.50px;width:31.78px;transform:scaleX(0.944);transform-origin:0 50%;font-size:10.8px;">0</div>
<div class="t" style="left:328.60px;top:593.35px;height:13.50px;line-height:13.50px;width:127.12px;transform:scaleX(0.944);transform-origin:0 50%;font-size:10.8px;">2016-10-17 00:30:00</div>
<div class="t" style="left:462.60px;top:593.35px;height:13.50px;line-height:13.50px;width:127.12px;transform:scaleX(0.944);transform-origin:0 50%;font-size:10.8px;">2025-10-17 23:59:59</div>
<div class="t" style="left:641.00px;top:593.35px;height:13.50px;line-height:13.50px;width:111.23px;transform:scaleX(0.944);transform-origin:0 50%;font-size:10.8px;">biwuchang.ogg</div>
<div class="t" style="left:748.00px;top:593.35px;height:13.50px;line-height:13.50px;width:42.37px;transform:scaleX(0.944);transform-origin:0 50%;font-size:10.8px;">61</div>
<div class="t" style="left:798.50px;top:593.35px;height:13.50px;line-height:13.50px;width:42.37px;transform:scaleX(0.944);transform-origin:0 50%;font-size:10.8px;">101</div>
<div class="t" style="left:879.90px;top:593.35px;height:13.50px;line-height:13.50px;width:127.12px;transform:scaleX(0.944);transform-origin:0 50%;font-size:10.8px;">set:ditu image:18</div>
<div class="t" style="left:21.70px;top:606.79px;height:13.50px;line-height:13.50px;width:49.58px;transform:scaleX(0.944);transform-origin:0 50%;font-size:10.8px;">8202</div>
<div class="t" style="left:71.00px;top:606.79px;height:13.50px;line-height:13.50px;width:21.19px;transform:scaleX(0.944);transform-origin:0 50%;font-size:10.8px;">0</div>
<div class="t" style="left:92.82px;top:606.79px;height:13.50px;line-height:13.50px;width:12.18px;transform:scaleX(0.944);transform-origin:100% 50%;font-size:10.8px;text-align:right;">-1</div>
<div class="t" style="left:114.70px;top:606.79px;height:13.50px;line-height:13.50px;width:94.20px;font-size:10.5px;">屠魔锁妖</div>
<div class="t" style="left:211.20px;top:606.79px;height:13.50px;line-height:13.50px;width:31.78px;transform:scaleX(0.944);transform-origin:0 50%;font-size:10.8px;">0</div>
<div class="t" style="left:279.70px;top:606.79px;height:13.50px;line-height:13.50px;width:31.78px;transform:scaleX(0.944);transform-origin:0 50%;font-size:10.8px;">0</div>
<div class="t" style="left:328.60px;top:606.79px;height:13.50px;line-height:13.50px;width:127.12px;transform:scaleX(0.944);transform-origin:0 50%;font-size:10.8px;">2016-10-17 00:30:00</div>
<div class="t" style="left:462.60px;top:606.79px;height:13.50px;line-height:13.50px;width:127.12px;transform:scaleX(0.944);transform-origin:0 50%;font-size:10.8px;">2025-10-17 23:59:59</div>
<div class="t" style="left:641.00px;top:606.79px;height:13.50px;line-height:13.50px;width:111.23px;transform:scaleX(0.944);transform-origin:0 50%;font-size:10.8px;">biwuchang.ogg</div>
<div class="t" style="left:748.00px;top:606.79px;height:13.50px;line-height:13.50px;width:42.37px;transform:scaleX(0.944);transform-origin:0 50%;font-size:10.8px;">148</div>
<div class="t" style="left:798.50px;top:606.79px;height:13.50px;line-height:13.50px;width:42.37px;transform:scaleX(0.944);transform-origin:0 50%;font-size:10.8px;">107</div>
<div class="t" style="left:879.90px;top:606.79px;height:13.50px;line-height:13.50px;width:127.12px;transform:scaleX(0.944);transform-origin:0 50%;font-size:10.8px;">set:ditu image:18</div>
<div class="t" style="left:21.70px;top:620.22px;height:13.50px;line-height:13.50px;width:49.58px;transform:scaleX(0.944);transform-origin:0 50%;font-size:10.8px;">8203</div>
<div class="t" style="left:71.00px;top:620.22px;height:13.50px;line-height:13.50px;width:21.19px;transform:scaleX(0.944);transform-origin:0 50%;font-size:10.8px;">0</div>
<div class="t" style="left:92.82px;top:620.22px;height:13.50px;line-height:13.50px;width:12.18px;transform:scaleX(0.944);transform-origin:100% 50%;font-size:10.8px;text-align:right;">-1</div>
<div class="t" style="left:114.70px;top:620.22px;height:13.50px;line-height:13.50px;width:94.20px;font-size:10.5px;">异界boss</div>
<div class="t" style="left:211.20px;top:620.22px;height:13.50px;line-height:13.50px;width:31.78px;transform:scaleX(0.944);transform-origin:0 50%;font-size:10.8px;">0</div>
<div class="t" style="left:279.70px;top:620.22px;height:13.50px;line-height:13.50px;width:31.78px;transform:scaleX(0.944);transform-origin:0 50%;font-size:10.8px;">0</div>
<div class="t" style="left:328.60px;top:620.22px;height:13.50px;line-height:13.50px;width:127.12px;transform:scaleX(0.944);transform-origin:0 50%;font-size:10.8px;">2016-10-17 00:30:00</div>
<div class="t" style="left:462.60px;top:620.22px;height:13.50px;line-height:13.50px;width:127.12px;transform:scaleX(0.944);transform-origin:0 50%;font-size:10.8px;">2025-10-17 23:59:59</div>
<div class="t" style="left:641.00px;top:620.22px;height:13.50px;line-height:13.50px;width:111.23px;transform:scaleX(0.944);transform-origin:0 50%;font-size:10.8px;">biwuchang.ogg</div>
<div class="t" style="left:748.00px;top:620.22px;height:13.50px;line-height:13.50px;width:42.37px;transform:scaleX(0.944);transform-origin:0 50%;font-size:10.8px;">148</div>
<div class="t" style="left:798.50px;top:620.22px;height:13.50px;line-height:13.50px;width:42.37px;transform:scaleX(0.944);transform-origin:0 50%;font-size:10.8px;">107</div>
<div class="t" style="left:879.90px;top:620.22px;height:13.50px;line-height:13.50px;width:127.12px;transform:scaleX(0.944);transform-origin:0 50%;font-size:10.8px;">set:ditu image:18</div>
<div class="t" style="left:21.70px;top:633.66px;height:13.50px;line-height:13.50px;width:49.58px;transform:scaleX(0.944);transform-origin:0 50%;font-size:10.8px;">8204</div>
<div class="t" style="left:71.00px;top:633.66px;height:13.50px;line-height:13.50px;width:21.19px;transform:scaleX(0.944);transform-origin:0 50%;font-size:10.8px;">0</div>
<div class="t" style="left:92.82px;top:633.66px;height:13.50px;line-height:13.50px;width:12.18px;transform:scaleX(0.944);transform-origin:100% 50%;font-size:10.8px;text-align:right;">-1</div>
<div class="t" style="left:114.70px;top:633.66px;height:13.50px;line-height:13.50px;width:94.20px;font-size:10.5px;">灭世之战</div>
<div class="t" style="left:211.20px;top:633.66px;height:13.50px;line-height:13.50px;width:31.78px;transform:scaleX(0.944);transform-origin:0 50%;font-size:10.8px;">0</div>
<div class="t" style="left:279.70px;top:633.66px;height:13.50px;line-height:13.50px;width:31.78px;transform:scaleX(0.944);transform-origin:0 50%;font-size:10.8px;">0</div>
<div class="t" style="left:328.60px;top:633.66px;height:13.50px;line-height:13.50px;width:127.12px;transform:scaleX(0.944);transform-origin:0 50%;font-size:10.8px;">2016-10-17 00:30:00</div>
<div class="t" style="left:462.60px;top:633.66px;height:13.50px;line-height:13.50px;width:127.12px;transform:scaleX(0.944);transform-origin:0 50%;font-size:10.8px;">2025-10-17 23:59:59</div>
<div class="t" style="left:641.00px;top:633.66px;height:13.50px;line-height:13.50px;width:111.23px;transform:scaleX(0.944);transform-origin:0 50%;font-size:10.8px;">biwuchang.ogg</div>
<div class="t" style="left:748.00px;top:633.66px;height:13.50px;line-height:13.50px;width:42.37px;transform:scaleX(0.944);transform-origin:0 50%;font-size:10.8px;">148</div>
<div class="t" style="left:798.50px;top:633.66px;height:13.50px;line-height:13.50px;width:42.37px;transform:scaleX(0.944);transform-origin:0 50%;font-size:10.8px;">107</div>
<div class="t" style="left:879.90px;top:633.66px;height:13.50px;line-height:13.50px;width:127.12px;transform:scaleX(0.944);transform-origin:0 50%;font-size:10.8px;">set:ditu image:18</div>
<div class="t" style="left:21.70px;top:647.10px;height:13.50px;line-height:13.50px;width:49.58px;transform:scaleX(0.944);transform-origin:0 50%;font-size:10.8px;">8205</div>
<div class="t" style="left:71.00px;top:647.10px;height:13.50px;line-height:13.50px;width:21.19px;transform:scaleX(0.944);transform-origin:0 50%;font-size:10.8px;">0</div>
<div class="t" style="left:92.82px;top:647.10px;height:13.50px;line-height:13.50px;width:12.18px;transform:scaleX(0.944);transform-origin:100% 50%;font-size:10.8px;text-align:right;">-1</div>
<div class="t" style="left:114.70px;top:647.10px;height:13.50px;line-height:13.50px;width:94.20px;font-size:10.5px;">黑耀赞助（福利）</div>
<div class="t" style="left:211.20px;top:647.10px;height:13.50px;line-height:13.50px;width:31.78px;transform:scaleX(0.944);transform-origin:0 50%;font-size:10.8px;">0</div>
<div class="t" style="left:279.70px;top:647.10px;height:13.50px;line-height:13.50px;width:31.78px;transform:scaleX(0.944);transform-origin:0 50%;font-size:10.8px;">0</div>
<div class="t" style="left:328.60px;top:647.10px;height:13.50px;line-height:13.50px;width:127.12px;transform:scaleX(0.944);transform-origin:0 50%;font-size:10.8px;">2016-10-17 00:30:00</div>
<div class="t" style="left:462.60px;top:647.10px;height:13.50px;line-height:13.50px;width:127.12px;transform:scaleX(0.944);transform-origin:0 50%;font-size:10.8px;">2025-10-17 23:59:59</div>
<div class="t" style="left:641.00px;top:647.10px;height:13.50px;line-height:13.50px;width:111.23px;transform:scaleX(0.944);transform-origin:0 50%;font-size:10.8px;">biwuchang.ogg</div>
<div class="t" style="left:748.00px;top:647.10px;height:13.50px;line-height:13.50px;width:42.37px;transform:scaleX(0.944);transform-origin:0 50%;font-size:10.8px;">60</div>
<div class="t" style="left:798.50px;top:647.10px;height:13.50px;line-height:13.50px;width:42.37px;transform:scaleX(0.944);transform-origin:0 50%;font-size:10.8px;">49</div>
<div class="t" style="left:879.90px;top:647.10px;height:13.50px;line-height:13.50px;width:127.12px;transform:scaleX(0.944);transform-origin:0 50%;font-size:10.8px;">set:ditu image:18</div>
<div class="t" style="left:21.70px;top:660.80px;height:13.50px;line-height:13.50px;width:49.58px;transform:scaleX(0.944);transform-origin:0 50%;font-size:10.8px;">8206</div>
<div class="t" style="left:71.00px;top:660.80px;height:13.50px;line-height:13.50px;width:21.19px;transform:scaleX(0.944);transform-origin:0 50%;font-size:10.8px;">0</div>
<div class="t" style="left:92.82px;top:660.80px;height:13.50px;line-height:13.50px;width:12.18px;transform:scaleX(0.944);transform-origin:100% 50%;font-size:10.8px;text-align:right;">-1</div>
<div class="t" style="left:114.70px;top:660.80px;height:13.50px;line-height:13.50px;width:94.20px;font-size:10.5px;">王者赞助（福利）</div>
<div class="t" style="left:211.20px;top:660.80px;height:13.50px;line-height:13.50px;width:31.78px;transform:scaleX(0.944);transform-origin:0 50%;font-size:10.8px;">0</div>
<div class="t" style="left:279.70px;top:660.80px;height:13.50px;line-height:13.50px;width:31.78px;transform:scaleX(0.944);transform-origin:0 50%;font-size:10.8px;">0</div>
<div class="t" style="left:328.60px;top:660.80px;height:13.50px;line-height:13.50px;width:127.12px;transform:scaleX(0.944);transform-origin:0 50%;font-size:10.8px;">2016-10-17 00:30:00</div>
<div class="t" style="left:462.60px;top:660.80px;height:13.50px;line-height:13.50px;width:127.12px;transform:scaleX(0.944);transform-origin:0 50%;font-size:10.8px;">2025-10-17 23:59:59</div>
<div class="t" style="left:641.00px;top:660.80px;height:13.50px;line-height:13.50px;width:111.23px;transform:scaleX(0.944);transform-origin:0 50%;font-size:10.8px;">changan.ogg</div>
<div class="t" style="left:748.00px;top:660.80px;height:13.50px;line-height:13.50px;width:42.37px;transform:scaleX(0.944);transform-origin:0 50%;font-size:10.8px;">132</div>
<div class="t" style="left:798.50px;top:660.80px;height:13.50px;line-height:13.50px;width:42.37px;transform:scaleX(0.944);transform-origin:0 50%;font-size:10.8px;">75</div>
<div class="t" style="left:879.90px;top:660.80px;height:13.50px;line-height:13.50px;width:127.12px;transform:scaleX(0.944);transform-origin:0 50%;font-size:10.8px;">set:ditu image:18</div>
<div class="t" style="left:21.70px;top:675.30px;height:13.50px;line-height:13.50px;width:49.58px;transform:scaleX(0.944);transform-origin:0 50%;font-size:10.8px;">8210</div>
<div class="t" style="left:71.00px;top:675.30px;height:13.50px;line-height:13.50px;width:21.19px;transform:scaleX(0.944);transform-origin:0 50%;font-size:10.8px;">0</div>
<div class="t" style="left:92.82px;top:675.30px;height:13.50px;line-height:13.50px;width:12.18px;transform:scaleX(0.944);transform-origin:100% 50%;font-size:10.8px;text-align:right;">-1</div>
<div class="t" style="left:114.70px;top:675.30px;height:13.50px;line-height:13.50px;width:94.20px;color:#e04050;font-size:8.5px !important;letter-spacing:2.6px;margin-top:-1.2px;font-size:10.5px;">迷神殿</div>
<div class="t" style="left:211.20px;top:675.30px;height:13.50px;line-height:13.50px;width:31.78px;transform:scaleX(0.944);transform-origin:0 50%;font-size:10.8px;">0</div>
<div class="t" style="left:279.70px;top:675.30px;height:13.50px;line-height:13.50px;width:31.78px;transform:scaleX(0.944);transform-origin:0 50%;font-size:10.8px;">0</div>
<div class="t" style="left:328.60px;top:675.30px;height:13.50px;line-height:13.50px;width:127.12px;transform:scaleX(0.944);transform-origin:0 50%;font-size:10.8px;">2016-10-17 00:30:00</div>
<div class="t" style="left:462.60px;top:675.30px;height:13.50px;line-height:13.50px;width:127.12px;transform:scaleX(0.944);transform-origin:0 50%;font-size:10.8px;">2025-10-17 23:59:59</div>
<div class="t" style="left:641.00px;top:675.30px;height:13.50px;line-height:13.50px;width:111.23px;transform:scaleX(0.944);transform-origin:0 50%;font-size:10.8px;">huaguoshan.ogg</div>
<div class="t" style="left:748.00px;top:675.30px;height:13.50px;line-height:13.50px;width:42.37px;transform:scaleX(0.944);transform-origin:0 50%;font-size:10.8px;">110</div>
<div class="t" style="left:798.50px;top:675.30px;height:13.50px;line-height:13.50px;width:42.37px;transform:scaleX(0.944);transform-origin:0 50%;font-size:10.8px;">101</div>
<div class="t" style="left:879.90px;top:675.30px;height:13.50px;line-height:13.50px;width:127.12px;transform:scaleX(0.944);transform-origin:0 50%;font-size:10.8px;">set:ditu image:24</div>
<div class="t" style="left:21.70px;top:688.80px;height:13.50px;line-height:13.50px;width:49.58px;transform:scaleX(0.944);transform-origin:0 50%;font-size:10.8px;">8211</div>
<div class="t" style="left:71.00px;top:688.80px;height:13.50px;line-height:13.50px;width:21.19px;transform:scaleX(0.944);transform-origin:0 50%;font-size:10.8px;">0</div>
<div class="t" style="left:92.82px;top:688.80px;height:13.50px;line-height:13.50px;width:12.18px;transform:scaleX(0.944);transform-origin:100% 50%;font-size:10.8px;text-align:right;">-1</div>
<div class="t" style="left:114.70px;top:688.80px;height:13.50px;line-height:13.50px;width:94.20px;font-size:10.5px;">迷醒场</div>
<div class="t" style="left:211.20px;top:688.80px;height:13.50px;line-height:13.50px;width:31.78px;transform:scaleX(0.944);transform-origin:0 50%;font-size:10.8px;">0</div>
<div class="t" style="left:279.70px;top:688.80px;height:13.50px;line-height:13.50px;width:31.78px;transform:scaleX(0.944);transform-origin:0 50%;font-size:10.8px;">0</div>
<div class="t" style="left:328.60px;top:688.80px;height:13.50px;line-height:13.50px;width:127.12px;transform:scaleX(0.944);transform-origin:0 50%;font-size:10.8px;">2016-10-17 00:30:00</div>
<div class="t" style="left:462.60px;top:688.80px;height:13.50px;line-height:13.50px;width:127.12px;transform:scaleX(0.944);transform-origin:0 50%;font-size:10.8px;">2025-10-17 23:59:59</div>
<div class="t" style="left:641.00px;top:688.80px;height:13.50px;line-height:13.50px;width:111.23px;transform:scaleX(0.944);transform-origin:0 50%;font-size:10.8px;">biwuchang.ogg</div>
<div class="t" style="left:748.00px;top:688.80px;height:13.50px;line-height:13.50px;width:42.37px;transform:scaleX(0.944);transform-origin:0 50%;font-size:10.8px;">100</div>
<div class="t" style="left:798.50px;top:688.80px;height:13.50px;line-height:13.50px;width:42.37px;transform:scaleX(0.944);transform-origin:0 50%;font-size:10.8px;">50</div>
<div class="t" style="left:879.90px;top:688.80px;height:13.50px;line-height:13.50px;width:127.12px;transform:scaleX(0.944);transform-origin:0 50%;font-size:10.8px;">set:ditu image:18</div>
<div style="left:68.50px;top:55.00px;width:43.50px;height:129.00px;background:#00ccff"></div>
<div class="t h" style="left:21.70px;top:171.55px;height:12.80px;line-height:12.80px;width:46.80px;">id</div>
<div class="fb" style="left:57.00px;top:172.00px"></div>
<div class="t h" style="left:71.50px;top:158.75px;height:12.80px;line-height:12.80px;width:22.00px;">进入</div>
<div class="t h" style="left:71.50px;top:171.55px;height:12.80px;line-height:12.80px;width:22.00px;">等级</div>
<div class="fb" style="left:82.00px;top:172.00px"></div>
<div class="t h" style="left:97.50px;top:107.55px;height:12.80px;line-height:12.80px;width:14.50px;">等</div>
<div class="t h" style="left:97.50px;top:120.35px;height:12.80px;line-height:12.80px;width:14.50px;">级</div>
<div class="t h" style="left:97.50px;top:133.15px;height:12.80px;line-height:12.80px;width:14.50px;">限</div>
<div class="t h" style="left:97.50px;top:145.95px;height:12.80px;line-height:12.80px;width:14.50px;">制</div>
<div class="t h" style="left:97.50px;top:158.75px;height:12.80px;line-height:12.80px;width:14.50px;">下</div>
<div class="t h" style="left:97.50px;top:171.55px;height:12.80px;line-height:12.80px;width:14.50px;">限</div>
<div class="fb" style="left:100.50px;top:172.00px"></div>
<div class="t h" style="left:115.00px;top:171.55px;height:12.80px;line-height:12.80px;width:94.20px;">名字</div>
<div class="fb" style="left:197.70px;top:172.00px"></div>
<div class="t h" style="left:212.20px;top:145.95px;height:12.80px;line-height:12.80px;width:65.50px;">玩家所在世界</div>
<div class="t h" style="left:212.20px;top:158.75px;height:12.80px;line-height:12.80px;width:65.50px;">地图位置左上</div>
<div class="t h" style="left:212.20px;top:171.55px;height:12.80px;line-height:12.80px;width:65.50px;">角X坐标</div>
<div class="fb" style="left:266.20px;top:172.00px"></div>
<div class="t h" style="left:280.70px;top:133.15px;height:12.80px;line-height:12.80px;width:45.30px;">玩家所在</div>
<div class="t h" style="left:280.70px;top:145.95px;height:12.80px;line-height:12.80px;width:45.30px;">世界地图</div>
<div class="t h" style="left:280.70px;top:158.75px;height:12.80px;line-height:12.80px;width:45.30px;">位置左上</div>
<div class="t h" style="left:280.70px;top:171.55px;height:12.80px;line-height:12.80px;width:45.30px;">角Y坐标</div>
<div class="fb" style="left:314.50px;top:172.00px"></div>
<div class="t h" style="left:329.00px;top:171.55px;height:12.80px;line-height:12.80px;width:131.00px;">开启时间</div>
<div class="fb" style="left:448.50px;top:172.00px"></div>
<div class="t h" style="left:463.00px;top:171.55px;height:12.80px;line-height:12.80px;width:175.00px;">结束时间</div>
<div class="fb" style="left:626.50px;top:172.00px"></div>
<div class="t h" style="left:641.00px;top:171.55px;height:12.80px;line-height:12.80px;width:105.00px;">音效</div>
<div class="fb" style="left:734.50px;top:172.00px"></div>
<div class="t h" style="left:749.00px;top:158.75px;height:12.80px;line-height:12.80px;width:47.50px;">飞行符传</div>
<div class="t h" style="left:749.00px;top:171.55px;height:12.80px;line-height:12.80px;width:47.50px;">送x坐标</div>
<div class="fb" style="left:785.00px;top:172.00px"></div>
<div class="t h" style="left:799.50px;top:158.75px;height:12.80px;line-height:12.80px;width:48.50px;">飞行符传</div>
<div class="t h" style="left:799.50px;top:171.55px;height:12.80px;line-height:12.80px;width:48.50px;">送y坐标</div>
<div class="fb" style="left:836.50px;top:172.00px"></div>
<div class="t h" style="left:851.00px;top:120.35px;height:12.80px;line-height:12.80px;width:26.20px;">是否</div>
<div class="t h" style="left:851.00px;top:133.15px;height:12.80px;line-height:12.80px;width:26.20px;">读取</div>
<div class="t h" style="left:851.00px;top:145.95px;height:12.80px;line-height:12.80px;width:26.20px;">传送</div>
<div class="t h" style="left:851.00px;top:158.75px;height:12.80px;line-height:12.80px;width:26.20px;">点文</div>
<div class="t h" style="left:851.00px;top:171.55px;height:12.80px;line-height:12.80px;width:26.20px;">件</div>
<div class="t h" style="left:880.20px;top:171.55px;height:12.80px;line-height:12.80px;width:131.80px;">地图图标</div>
<div class="t h" style="left:1015.00px;top:158.75px;height:12.80px;line-height:12.80px;width:75.00px;">是否</div>
<div class="t h" style="left:1015.00px;top:171.55px;height:12.80px;line-height:12.80px;width:75.00px;">队伍</div>
<div class="ctri" style="left:455.50px;top:55.00px"></div>
<div class="ctri" style="left:633.50px;top:55.00px"></div>
<div style="left:2px;top:55.0px;width:16.7px;height:636.0px;background:#efefef"></div>
<div class="rn" style="left:0px;top:56.3px;width:9px;height:129.0px;line-height:129.0px;text-align:right">1</div>
<div class="rn" style="left:-11.7px;top:185.86px;width:26.5px;height:13.5px;line-height:13.5px;text-align:right;">221</div>
<div style="left:2px;top:196.56px;width:16.7px;height:1px;background:#e2e2e2"></div>
<div class="rn" style="left:-11.7px;top:199.42px;width:26.5px;height:13.5px;line-height:13.5px;text-align:right;">222</div>
<div style="left:2px;top:210.12px;width:16.7px;height:1px;background:#e2e2e2"></div>
<div class="rn" style="left:-11.7px;top:212.98px;width:26.5px;height:13.5px;line-height:13.5px;text-align:right;">223</div>
<div style="left:2px;top:223.68px;width:16.7px;height:1px;background:#e2e2e2"></div>
<div class="rn" style="left:-11.7px;top:226.53px;width:26.5px;height:13.5px;line-height:13.5px;text-align:right;">224</div>
<div style="left:2px;top:237.23px;width:16.7px;height:1px;background:#e2e2e2"></div>
<div class="rn" style="left:-11.7px;top:240.09px;width:26.5px;height:13.5px;line-height:13.5px;text-align:right;">225</div>
<div style="left:2px;top:250.79px;width:16.7px;height:1px;background:#e2e2e2"></div>
<div class="rn" style="left:-11.7px;top:253.65px;width:26.5px;height:13.5px;line-height:13.5px;text-align:right;">226</div>
<div style="left:2px;top:264.35px;width:16.7px;height:1px;background:#e2e2e2"></div>
<div class="rn" style="left:-11.7px;top:267.03px;width:26.5px;height:13.5px;line-height:13.5px;text-align:right;">227</div>
<div style="left:2px;top:277.73px;width:16.7px;height:1px;background:#e2e2e2"></div>
<div class="rn" style="left:-11.7px;top:280.40px;width:26.5px;height:13.5px;line-height:13.5px;text-align:right;">228</div>
<div style="left:2px;top:291.10px;width:16.7px;height:1px;background:#e2e2e2"></div>
<div class="rn" style="left:-11.7px;top:293.78px;width:26.5px;height:13.5px;line-height:13.5px;text-align:right;">229</div>
<div style="left:2px;top:304.48px;width:16.7px;height:1px;background:#e2e2e2"></div>
<div class="rn" style="left:-11.7px;top:307.15px;width:26.5px;height:13.5px;line-height:13.5px;text-align:right;">230</div>
<div style="left:2px;top:317.85px;width:16.7px;height:1px;background:#e2e2e2"></div>
<div class="rn" style="left:-11.7px;top:320.53px;width:26.5px;height:13.5px;line-height:13.5px;text-align:right;">231</div>
<div style="left:2px;top:331.23px;width:16.7px;height:1px;background:#e2e2e2"></div>
<div class="rn" style="left:-11.7px;top:333.90px;width:26.5px;height:13.5px;line-height:13.5px;text-align:right;">232</div>
<div style="left:2px;top:344.60px;width:16.7px;height:1px;background:#e2e2e2"></div>
<div class="rn" style="left:-11.7px;top:347.00px;width:26.5px;height:13.5px;line-height:13.5px;text-align:right;">233</div>
<div style="left:2px;top:357.70px;width:16.7px;height:1px;background:#e2e2e2"></div>
<div class="rn" style="left:-11.7px;top:360.70px;width:26.5px;height:13.5px;line-height:13.5px;text-align:right;">234</div>
<div style="left:2px;top:371.40px;width:16.7px;height:1px;background:#e2e2e2"></div>
<div class="rn" style="left:-11.7px;top:374.40px;width:26.5px;height:13.5px;line-height:13.5px;text-align:right;color:#2b8a5c;">235</div>
<div style="left:2px;top:385.10px;width:16.7px;height:1px;background:#e2e2e2"></div>
<div class="rn" style="left:-11.7px;top:391.10px;width:26.5px;height:13.5px;line-height:13.5px;text-align:right;">236</div>
<div style="left:2px;top:401.80px;width:16.7px;height:1px;background:#e2e2e2"></div>
<div class="rn" style="left:-11.7px;top:404.60px;width:26.5px;height:13.5px;line-height:13.5px;text-align:right;">237</div>
<div style="left:2px;top:415.30px;width:16.7px;height:1px;background:#e2e2e2"></div>
<div class="rn" style="left:-11.7px;top:418.10px;width:26.5px;height:13.5px;line-height:13.5px;text-align:right;">238</div>
<div style="left:2px;top:428.80px;width:16.7px;height:1px;background:#e2e2e2"></div>
<div class="rn" style="left:-11.7px;top:431.60px;width:26.5px;height:13.5px;line-height:13.5px;text-align:right;">239</div>
<div style="left:2px;top:442.30px;width:16.7px;height:1px;background:#e2e2e2"></div>
<div class="rn" style="left:-11.7px;top:445.10px;width:26.5px;height:13.5px;line-height:13.5px;text-align:right;">240</div>
<div style="left:2px;top:455.80px;width:16.7px;height:1px;background:#e2e2e2"></div>
<div class="rn" style="left:-11.7px;top:458.60px;width:26.5px;height:13.5px;line-height:13.5px;text-align:right;">241</div>
<div style="left:2px;top:469.30px;width:16.7px;height:1px;background:#e2e2e2"></div>
<div class="rn" style="left:-11.7px;top:472.10px;width:26.5px;height:13.5px;line-height:13.5px;text-align:right;">242</div>
<div style="left:2px;top:482.80px;width:16.7px;height:1px;background:#e2e2e2"></div>
<div class="rn" style="left:-11.7px;top:485.60px;width:26.5px;height:13.5px;line-height:13.5px;text-align:right;">243</div>
<div style="left:2px;top:496.30px;width:16.7px;height:1px;background:#e2e2e2"></div>
<div class="rn" style="left:-11.7px;top:499.10px;width:26.5px;height:13.5px;line-height:13.5px;text-align:right;">244</div>
<div style="left:2px;top:509.80px;width:16.7px;height:1px;background:#e2e2e2"></div>
<div class="rn" style="left:-11.7px;top:512.60px;width:26.5px;height:13.5px;line-height:13.5px;text-align:right;">245</div>
<div style="left:2px;top:523.30px;width:16.7px;height:1px;background:#e2e2e2"></div>
<div class="rn" style="left:-11.7px;top:526.10px;width:26.5px;height:13.5px;line-height:13.5px;text-align:right;">246</div>
<div style="left:2px;top:536.80px;width:16.7px;height:1px;background:#e2e2e2"></div>
<div class="rn" style="left:-11.7px;top:539.60px;width:26.5px;height:13.5px;line-height:13.5px;text-align:right;">247</div>
<div style="left:2px;top:550.30px;width:16.7px;height:1px;background:#e2e2e2"></div>
<div class="rn" style="left:-11.7px;top:553.04px;width:26.5px;height:13.5px;line-height:13.5px;text-align:right;">248</div>
<div style="left:2px;top:563.74px;width:16.7px;height:1px;background:#e2e2e2"></div>
<div class="rn" style="left:-11.7px;top:566.47px;width:26.5px;height:13.5px;line-height:13.5px;text-align:right;">249</div>
<div style="left:2px;top:577.17px;width:16.7px;height:1px;background:#e2e2e2"></div>
<div class="rn" style="left:-11.7px;top:579.91px;width:26.5px;height:13.5px;line-height:13.5px;text-align:right;">250</div>
<div style="left:2px;top:590.61px;width:16.7px;height:1px;background:#e2e2e2"></div>
<div class="rn" style="left:-11.7px;top:593.35px;width:26.5px;height:13.5px;line-height:13.5px;text-align:right;">251</div>
<div style="left:2px;top:604.05px;width:16.7px;height:1px;background:#e2e2e2"></div>
<div class="rn" style="left:-11.7px;top:606.79px;width:26.5px;height:13.5px;line-height:13.5px;text-align:right;">252</div>
<div style="left:2px;top:617.49px;width:16.7px;height:1px;background:#e2e2e2"></div>
<div class="rn" style="left:-11.7px;top:620.22px;width:26.5px;height:13.5px;line-height:13.5px;text-align:right;">253</div>
<div style="left:2px;top:630.92px;width:16.7px;height:1px;background:#e2e2e2"></div>
<div class="rn" style="left:-11.7px;top:633.66px;width:26.5px;height:13.5px;line-height:13.5px;text-align:right;">254</div>
<div style="left:2px;top:644.36px;width:16.7px;height:1px;background:#e2e2e2"></div>
<div class="rn" style="left:-11.7px;top:647.10px;width:26.5px;height:13.5px;line-height:13.5px;text-align:right;">255</div>
<div style="left:2px;top:657.80px;width:16.7px;height:1px;background:#e2e2e2"></div>
<div class="rn" style="left:-11.7px;top:660.80px;width:26.5px;height:13.5px;line-height:13.5px;text-align:right;">256</div>
<div style="left:2px;top:671.50px;width:16.7px;height:1px;background:#e2e2e2"></div>
<div class="rn" style="left:-11.7px;top:675.30px;width:26.5px;height:13.5px;line-height:13.5px;text-align:right;">257</div>
<div style="left:2px;top:686.00px;width:16.7px;height:1px;background:#e2e2e2"></div>
<div class="rn" style="left:-11.7px;top:688.80px;width:26.5px;height:13.5px;line-height:13.5px;text-align:right;">258</div>
<div style="left:2px;top:699.50px;width:16.7px;height:1px;background:#e2e2e2"></div>
<div style="left:16.7px;top:372.40px;width:2px;height:13.70px;background:#2b8a5c"></div>
<div style="left:2px;top:35.5px;width:1030px;height:19.5px;background:#eeeeee"></div>
<div style="left:112.00px;top:40px;width:97.20px;height:15.00px;background:#dcdcdc"></div>
<div style="left:112.00px;top:53.00px;width:97.20px;height:2px;background:#4e9e7a"></div>
<div class="corner" style="left:5.5px;top:45px"></div>
<div style="left:67.50px;top:37.5px;width:1px;height:17.5px;background:#dddddd"></div>
<div class="cl" style="left:18.70px;top:41.5px;width:49.80px;height:14px;line-height:14px">A</div>
<div style="left:92.50px;top:37.5px;width:1px;height:17.5px;background:#dddddd"></div>
<div class="cl" style="left:68.50px;top:41.5px;width:25.00px;height:14px;line-height:14px">B</div>
<div style="left:111.00px;top:37.5px;width:1px;height:17.5px;background:#dddddd"></div>
<div class="cl" style="left:93.50px;top:41.5px;width:18.50px;height:14px;line-height:14px">C</div>
<div style="left:208.20px;top:37.5px;width:1px;height:17.5px;background:#dddddd"></div>
<div class="cl" style="left:112.00px;top:41.5px;width:97.20px;height:14px;line-height:14px">D</div>
<div style="left:276.70px;top:37.5px;width:1px;height:17.5px;background:#dddddd"></div>
<div class="cl" style="left:209.20px;top:41.5px;width:68.50px;height:14px;line-height:14px">AC</div>
<div style="left:325.00px;top:37.5px;width:1px;height:17.5px;background:#dddddd"></div>
<div class="cl" style="left:277.70px;top:41.5px;width:48.30px;height:14px;line-height:14px">AD</div>
<div style="left:459.00px;top:37.5px;width:1px;height:17.5px;background:#dddddd"></div>
<div class="cl" style="left:326.00px;top:41.5px;width:134.00px;height:14px;line-height:14px">AE</div>
<div style="left:637.00px;top:37.5px;width:1px;height:17.5px;background:#dddddd"></div>
<div class="cl" style="left:460.00px;top:41.5px;width:178.00px;height:14px;line-height:14px">AF</div>
<div style="left:745.00px;top:37.5px;width:1px;height:17.5px;background:#dddddd"></div>
<div class="cl" style="left:638.00px;top:41.5px;width:108.00px;height:14px;line-height:14px">AG</div>
<div style="left:795.50px;top:37.5px;width:1px;height:17.5px;background:#dddddd"></div>
<div class="cl" style="left:746.00px;top:41.5px;width:50.50px;height:14px;line-height:14px">AH</div>
<div style="left:847.00px;top:37.5px;width:1px;height:17.5px;background:#dddddd"></div>
<div class="cl" style="left:796.50px;top:41.5px;width:51.50px;height:14px;line-height:14px">AI</div>
<div style="left:876.20px;top:37.5px;width:1px;height:17.5px;background:#dddddd"></div>
<div class="cl" style="left:848.00px;top:41.5px;width:29.20px;height:14px;line-height:14px">AJ</div>
<div style="left:1011.00px;top:37.5px;width:1px;height:17.5px;background:#dddddd"></div>
<div class="cl" style="left:877.20px;top:41.5px;width:134.80px;height:14px;line-height:14px">AK</div>
<div style="left:1089.00px;top:37.5px;width:1px;height:17.5px;background:#dddddd"></div>
<div class="cl" style="left:1012.00px;top:41.5px;width:78.00px;height:14px;line-height:14px">AL</div>
<div style="left:111.00px;top:372.40px;width:96.90px;height:14.30px;border:2.2px solid #2f8a68;box-sizing:border-box"></div>
<div style="left:206.70px;top:384.10px;width:4px;height:4px;background:#2f8a68;border:1px solid #fff"></div>
<div style="left:112.00px;top:672.00px;width:97.00px;height:15.00px;border:1px solid #1d4a7a;border-left:1.6px solid #1d3a5a;border-right:0;box-sizing:border-box"></div>
<div style="left:445px;top:148.5px;width:173px;height:560px;border:2.6px solid #e23a44;border-radius:2.5px;box-sizing:border-box"></div>
<div class="circ" style="left:53px;top:336.5px"><span class="chev l"></span></div>
<div class="circ" style="left:941px;top:336.5px"><span class="chev r"></span></div>
</div>
<!-- top chrome -->
<div style="left:0;top:0;width:1024px;height:35.5px;background:#ecedf0"></div>
<div style="left:0;top:1px;width:1024px;height:13px;background:#fdf5e4"></div>
<div style="left:0;top:14px;width:1024px;height:5px;background:linear-gradient(#f2efe9,#e6e7eb)"></div>
<div style="left:2px;top:18.9px;width:98.5px;height:16px;background:#fff;border-radius:0 3px 3px 0"></div>
<div style="left:108.3px;top:18.9px;width:920px;height:16px;background:#fff;border-radius:3px 0 0 3px"></div>
<div style="left:36.5px;top:20.9px;width:40px;height:16px;line-height:16px;font-family:'Liberation Mono',monospace;font-size:8.3px;letter-spacing:-0.45px;color:#444">D235</div>
<div style="left:92.3px;top:23.6px;width:4px;height:4px;border-right:1.1px solid #888;border-bottom:1.1px solid #888;transform:rotate(45deg)"></div>
<div style="left:122px;top:22.8px;width:7.6px;height:7.6px;border:1.3px solid #c2c2c2;border-radius:50%"></div>
<div style="left:125.2px;top:25.4px;width:1.4px;height:2.2px;background:#c8c8c8"></div>
<div style="left:128.6px;top:30.2px;width:2.8px;height:1.3px;background:#c2c2c2;transform:rotate(45deg)"></div>
<div style="left:141px;top:18.6px;width:14px;height:16px;line-height:16px;font-family:'Liberation Serif',serif;font-style:italic;font-size:11.5px;color:#b8b8b8">fx</div>
<div style="left:157px;top:22px;width:1px;height:10px;background:#dcdcdc"></div>
<div style="left:162.5px;top:18.9px;width:200px;height:16px;line-height:16px;font-size:9.5px;color:#222;white-space:nowrap">白银赞助（福利）</div>
<!-- banner bits -->
<div style="left:674.5px;top:-3px;width:0;height:0;border-left:4.5px solid transparent;border-right:4.5px solid transparent;border-bottom:9px solid #f5b800"></div>
<div style="left:689px;top:-2px;width:165px;height:10px;line-height:10px;font-size:7.2px;color:#666;white-space:nowrap;overflow:hidden">你当前处于访客状态，登录激活更多功能和服务。</div>
<div style="left:859px;top:-5px;width:45px;height:14px;background:#f4a21a;border-radius:3px;color:#fff;font-size:9px;line-height:14px;text-align:center;white-space:nowrap">立即登录</div>
<div style="left:0;top:0;width:1024px;height:1.2px;background:#262626"></div>
<div style="left:0;top:0;width:2px;height:691px;background:#1e2a33"></div>
</body></html>
